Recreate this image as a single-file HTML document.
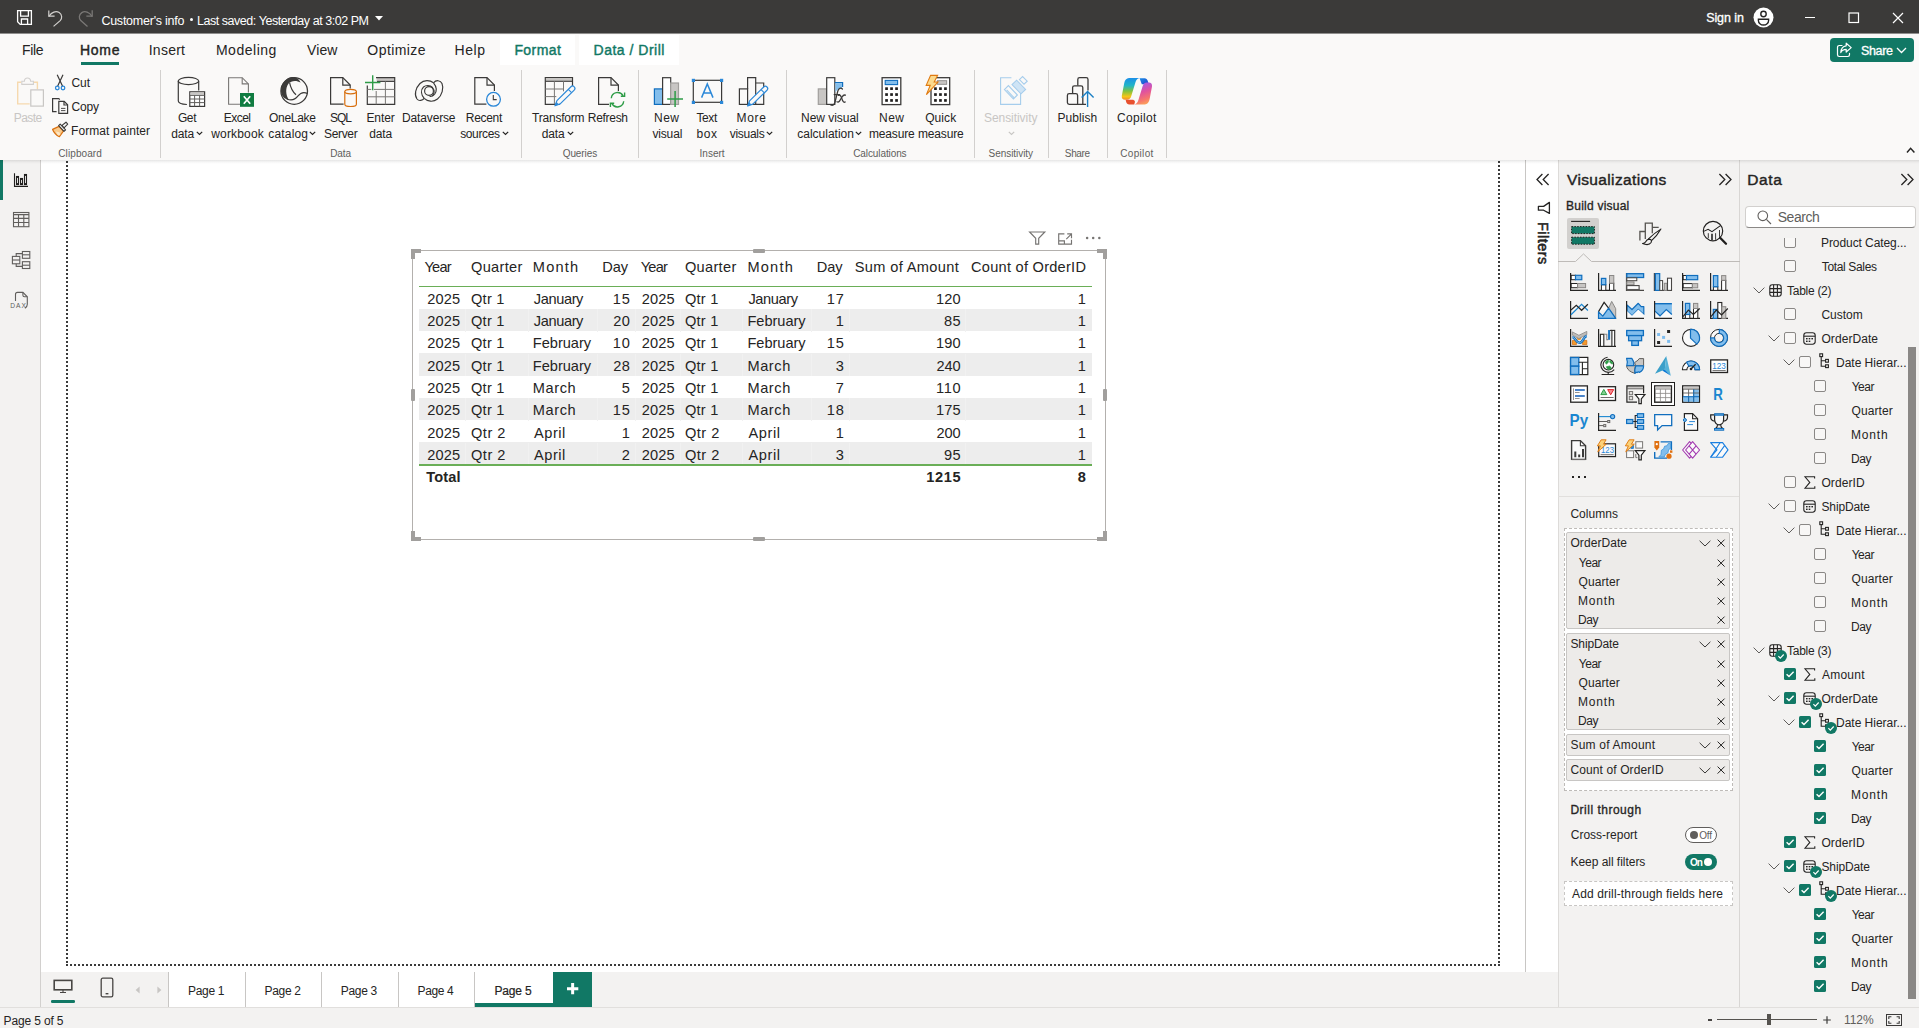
<!DOCTYPE html>
<html lang="en"><head><meta charset="utf-8"><title>Power BI Desktop</title><style>
html,body{margin:0;padding:0;}
body{width:1919px;height:1028px;overflow:hidden;position:relative;background:#f3f2f1;font-family:"Liberation Sans",sans-serif;}
.a{position:absolute;display:block;}
.t{position:absolute;white-space:nowrap;display:block;}
svg{overflow:visible;}
</style></head>
<body>
<!-- s1_frame -->
<div class="a" style="left:0px;top:0px;width:1919px;height:1028px;background:#f3f2f1;"></div>
<div class="a" style="left:0px;top:0px;width:1919px;height:33px;background:#3b3a39;"></div>
<div class="a" style="left:0px;top:33px;width:1919px;height:1px;background:#8f8e8d;"></div>
<div class="a" style="left:0px;top:34px;width:1919px;height:126px;background:#faf9f8;"></div>
<div class="a" style="left:0px;top:160px;width:1919px;height:4px;background:linear-gradient(rgba(0,0,0,0.10),rgba(0,0,0,0.035) 50%,rgba(0,0,0,0));z-index:5;"></div>
<div class="a" style="left:41px;top:160px;width:1484px;height:812px;background:#ffffff;"></div>
<div class="a" style="left:1526px;top:160px;width:32px;height:812px;background:#ffffff;"></div>
<div class="a" style="left:1525px;top:160px;width:1px;height:812px;background:#c8c6c4;"></div>
<div class="a" style="left:0px;top:160px;width:40px;height:848px;background:#f3f2f1;"></div>
<div class="a" style="left:40px;top:160px;width:1px;height:848px;background:#d2d0ce;"></div>
<div class="a" style="left:0px;top:160px;width:3px;height:40px;background:#117865;"></div>
<div class="a" style="left:1558px;top:160px;width:182px;height:848px;background:#f3f2f1;"></div>
<div class="a" style="left:1739px;top:160px;width:1px;height:848px;background:#d8d6d4;"></div>
<div class="a" style="left:1558px;top:160px;width:1px;height:848px;background:#dddbd9;"></div>
<div class="a" style="left:1740px;top:160px;width:179px;height:848px;background:#f3f2f1;"></div>
<div class="a" style="left:0px;top:1008px;width:1919px;height:20px;background:#f3f2f1;"></div>
<div class="a" style="left:0px;top:1007px;width:1919px;height:1px;background:#e1dfdd;"></div>
<div class="a" style="left:66px;top:161px;width:2px;height:802px;background:repeating-linear-gradient(to bottom,#3a3a3a 0 2px,transparent 2px 4px);background-position:0 0;"></div>
<div class="a" style="left:1498px;top:161px;width:2px;height:802px;background:repeating-linear-gradient(to bottom,#3a3a3a 0 2px,transparent 2px 4px);"></div>
<div class="a" style="left:66px;top:964px;width:1434px;height:2px;background:repeating-linear-gradient(to right,#3a3a3a 0 2px,transparent 2px 4px);"></div>
<!-- s2_title -->
<svg class="a" style="left:16px;top:9px;" width="17" height="17" viewBox="0 0 17 17"><g fill="none" stroke="#fff" stroke-width="1.3"><path d="M1.6 1.6h13.8v13.8H4.2L1.6 12.8z"/><path d="M4.6 1.6v5.6h7.8V1.6"/><path d="M5.4 15.4V10h6.2v5.4"/></g></svg>
<svg class="a" style="left:47px;top:9px;" width="17" height="18" viewBox="0 0 17 18"><g fill="none" stroke="#d2d0ce" stroke-width="1.2" stroke-linecap="square"><path d="M1.8 2v5.2H7"/><path d="M2.2 7C4.5 3.2 9 1.6 12.2 3.6c3 2 3.2 5.6 1 8L7 17"/></g></svg>
<svg class="a" style="left:77px;top:9px;" width="17" height="18" viewBox="0 0 17 18"><g fill="none" stroke="#7a7876" stroke-width="1.3" stroke-linecap="square"><path d="M15.2 2v5.2H10"/><path d="M14.8 7C12.5 3.2 8 1.6 4.8 3.6c-3 2-3.2 5.6-1 8L10 17"/></g></svg>
<span class="t" style="left:101.38px;top:15px;font-size:12.5px;line-height:12.5px;color:#ffffff;letter-spacing:-0.24px;">Customer's info</span>
<div class="a" style="left:189.7px;top:17.9px;width:3.6px;height:3.6px;background:#ffffff;border-radius:50%;"></div>
<span class="t" style="left:197px;top:15px;font-size:12.5px;line-height:12.5px;color:#ffffff;letter-spacing:-0.46px;">Last saved: Yesterday at 3:02 PM</span>
<svg class="a" style="left:375px;top:15.5px;" width="8" height="5" viewBox="0 0 8 5"><path d="M0 0h8L4 4.6z" fill="#fff"/></svg>
<span class="t" style="left:1706.14px;top:12px;font-size:12.5px;line-height:12.5px;color:#ffffff;-webkit-text-stroke:0.32px #ffffff;letter-spacing:-0.06px;">Sign in</span>
<svg class="a" style="left:1752.6px;top:6.5px;" width="21" height="21" viewBox="0 0 21 21"><circle cx="10.5" cy="10.5" r="10" fill="#fff"/><circle cx="10.5" cy="7" r="2.7" fill="none" stroke="#252423" stroke-width="1.4"/><path d="M5.4 12.2h10.2v1.2a5.1 4.6 0 0 1-10.2 0z" fill="none" stroke="#252423" stroke-width="1.4"/></svg>
<div class="a" style="left:1805px;top:17px;width:10px;height:1px;background:#fff;"></div>
<svg class="a" style="left:1848px;top:12px;" width="12" height="12" viewBox="0 0 12 12"><rect x="1" y="1" width="9.5" height="9.5" fill="none" stroke="#fff" stroke-width="1.2"/></svg>
<svg class="a" style="left:1892px;top:12px;" width="12" height="12" viewBox="0 0 12 12"><path d="M1 1l10 10M11 1L1 11" stroke="#fff" stroke-width="1.2" fill="none"/></svg>
<div class="a" style="left:500px;top:35px;width:75.3px;height:30px;background:#ffffff;"></div>
<div class="a" style="left:578.8px;top:35px;width:100.4px;height:30px;background:#ffffff;"></div>
<span class="t" style="left:21.88px;top:43px;font-size:14px;line-height:14px;color:#252423;letter-spacing:-0.29px;">File</span>
<span class="t" style="left:79.88px;top:43px;font-size:14px;line-height:14px;color:#252423;-webkit-text-stroke:0.42px #252423;letter-spacing:0.79px;">Home</span>
<div class="a" style="left:81px;top:62px;width:38px;height:3px;background:#117865;"></div>
<span class="t" style="left:148.74px;top:43px;font-size:14px;line-height:14px;color:#252423;letter-spacing:0.25px;">Insert</span>
<span class="t" style="left:215.88px;top:43px;font-size:14px;line-height:14px;color:#252423;letter-spacing:0.53px;">Modeling</span>
<span class="t" style="left:307px;top:43px;font-size:14px;line-height:14px;color:#252423;letter-spacing:0.13px;">View</span>
<span class="t" style="left:367.37px;top:43px;font-size:14px;line-height:14px;color:#252423;letter-spacing:0.42px;">Optimize</span>
<span class="t" style="left:454.38px;top:43px;font-size:14px;line-height:14px;color:#252423;letter-spacing:0.64px;">Help</span>
<span class="t" style="left:514.38px;top:43px;font-size:14px;line-height:14px;color:#117865;-webkit-text-stroke:0.42px #117865;letter-spacing:0.44px;">Format</span>
<span class="t" style="left:593.58px;top:43px;font-size:14px;line-height:14px;color:#117865;-webkit-text-stroke:0.42px #117865;letter-spacing:0.5px;">Data / Drill</span>
<div class="a" style="left:1830px;top:38px;width:84px;height:24px;background:#117865;border-radius:4px;"></div>
<svg class="a" style="left:1836px;top:41.5px;" width="17" height="16" viewBox="0 0 17 16"><g fill="none" stroke="#fff" stroke-width="1.2" stroke-linejoin="round" stroke-linecap="round"><path d="M6 3.5H3.2a1.7 1.7 0 0 0-1.7 1.7v7.6a1.7 1.7 0 0 0 1.7 1.7h8.6a1.7 1.7 0 0 0 1.7-1.7v-1.4"/><path d="M10.2 1.2l5 4.4-5 4.4V7.4C7.6 7.4 5.8 8.4 4.8 10.6 5 7 6.8 4.2 10.2 3.8z"/></g></svg>
<span class="t" style="left:1860.94px;top:45px;font-size:12.5px;line-height:12.5px;color:#fff;-webkit-text-stroke:0.32px #fff;letter-spacing:-0.31px;">Share</span>
<svg class="a" style="left:1896px;top:46.5px;" width="11" height="7" viewBox="0 0 11 7"><path d="M1 1l4.5 4.5L10 1" fill="none" stroke="#fff" stroke-width="1.3"/></svg>
<svg class="a" style="left:1906px;top:147px;" width="9" height="6" viewBox="0 0 9 6"><path d="M1 5.400L4.600 1.300 8.400 5.400" fill="none" stroke="#252423" stroke-width="1.500"/></svg>
<!-- s3_ribbon -->
<div class="a" style="left:160px;top:70px;width:1px;height:88px;background:#d2d0ce;"></div>
<div class="a" style="left:521px;top:70px;width:1px;height:88px;background:#d2d0ce;"></div>
<div class="a" style="left:638px;top:70px;width:1px;height:88px;background:#d2d0ce;"></div>
<div class="a" style="left:786px;top:70px;width:1px;height:88px;background:#d2d0ce;"></div>
<div class="a" style="left:974px;top:70px;width:1px;height:88px;background:#d2d0ce;"></div>
<div class="a" style="left:1048px;top:70px;width:1px;height:88px;background:#d2d0ce;"></div>
<div class="a" style="left:1107px;top:70px;width:1px;height:88px;background:#d2d0ce;"></div>
<div class="a" style="left:1166px;top:70px;width:1px;height:88px;background:#d2d0ce;"></div>
<span class="t" style="left:58.25px;top:149px;font-size:10px;line-height:10px;color:#605e5c;letter-spacing:0.1px;">Clipboard</span>
<span class="t" style="left:330.2px;top:149px;font-size:10px;line-height:10px;color:#605e5c;letter-spacing:-0.12px;">Data</span>
<span class="t" style="left:562.7px;top:149px;font-size:10px;line-height:10px;color:#605e5c;letter-spacing:-0.08px;">Queries</span>
<span class="t" style="left:699.5px;top:149px;font-size:10px;line-height:10px;color:#605e5c;letter-spacing:0.02px;">Insert</span>
<span class="t" style="left:853.25px;top:149px;font-size:10px;line-height:10px;color:#605e5c;letter-spacing:-0.1px;">Calculations</span>
<span class="t" style="left:988.55px;top:149px;font-size:10px;line-height:10px;color:#605e5c;letter-spacing:-0.05px;">Sensitivity</span>
<span class="t" style="left:1064.8px;top:149px;font-size:10px;line-height:10px;color:#605e5c;letter-spacing:-0.33px;">Share</span>
<span class="t" style="left:1120.25px;top:149px;font-size:10px;line-height:10px;color:#605e5c;letter-spacing:0.32px;">Copilot</span>
<span class="t" style="left:13.74px;top:112px;font-size:12px;line-height:12px;color:#c8c6c4;letter-spacing:-0.55px;">Paste</span>
<span class="t" style="left:71.4px;top:77px;font-size:12px;line-height:12px;color:#252423;letter-spacing:-0.03px;">Cut</span>
<span class="t" style="left:71.4px;top:101px;font-size:12px;line-height:12px;color:#252423;letter-spacing:-0.14px;">Copy</span>
<span class="t" style="left:71.04px;top:125px;font-size:12px;line-height:12px;color:#252423;letter-spacing:0.08px;">Format painter</span>
<span class="t" style="left:177.9px;top:112px;font-size:12px;line-height:12px;color:#252423;letter-spacing:-0.36px;">Get</span><span class="t" style="left:171.27px;top:128px;font-size:12px;line-height:12px;color:#252423;letter-spacing:-0.14px;">data</span><svg class="a" style="left:196.25px;top:131px;" width="7" height="5" viewBox="0 0 7 5"><path d="M0.8 0.8L3.5 3.5 6.2 0.8" fill="none" stroke="#252423" stroke-width="1.2"/></svg>
<span class="t" style="left:223.79px;top:112px;font-size:12px;line-height:12px;color:#252423;letter-spacing:-0.54px;">Excel</span><span class="t" style="left:211.31px;top:128px;font-size:12px;line-height:12px;color:#252423;letter-spacing:0.15px;">workbook</span>
<span class="t" style="left:268.96px;top:112px;font-size:12px;line-height:12px;color:#252423;letter-spacing:-0.28px;">OneLake</span><span class="t" style="left:268.27px;top:128px;font-size:12px;line-height:12px;color:#252423;letter-spacing:0.17px;">catalog</span><svg class="a" style="left:309.25px;top:131px;" width="7" height="5" viewBox="0 0 7 5"><path d="M0.8 0.8L3.5 3.5 6.2 0.8" fill="none" stroke="#252423" stroke-width="1.2"/></svg>
<span class="t" style="left:329.91px;top:112px;font-size:12px;line-height:12px;color:#252423;letter-spacing:-1px;">SQL</span><span class="t" style="left:323.96px;top:128px;font-size:12px;line-height:12px;color:#252423;letter-spacing:-0.32px;">Server</span>
<span class="t" style="left:366.44px;top:112px;font-size:12px;line-height:12px;color:#252423;letter-spacing:-0.08px;">Enter</span><span class="t" style="left:369.37px;top:128px;font-size:12px;line-height:12px;color:#252423;letter-spacing:-0.21px;">data</span>
<span class="t" style="left:402.04px;top:112px;font-size:12px;line-height:12px;color:#252423;letter-spacing:-0.15px;">Dataverse</span>
<span class="t" style="left:465.79px;top:112px;font-size:12px;line-height:12px;color:#252423;letter-spacing:-0.3px;">Recent</span><span class="t" style="left:460.2px;top:128px;font-size:12px;line-height:12px;color:#252423;letter-spacing:-0.38px;">sources</span><svg class="a" style="left:501.5px;top:131px;" width="7" height="5" viewBox="0 0 7 5"><path d="M0.8 0.8L3.5 3.5 6.2 0.8" fill="none" stroke="#252423" stroke-width="1.2"/></svg>
<span class="t" style="left:532.01px;top:112px;font-size:12px;line-height:12px;color:#252423;letter-spacing:-0.21px;">Transform</span><span class="t" style="left:541.77px;top:128px;font-size:12px;line-height:12px;color:#252423;letter-spacing:-0.14px;">data</span><svg class="a" style="left:566.75px;top:131px;" width="7" height="5" viewBox="0 0 7 5"><path d="M0.8 0.8L3.5 3.5 6.2 0.8" fill="none" stroke="#252423" stroke-width="1.2"/></svg>
<span class="t" style="left:587.79px;top:112px;font-size:12px;line-height:12px;color:#252423;letter-spacing:-0.3px;">Refresh</span>
<span class="t" style="left:654.04px;top:112px;font-size:12px;line-height:12px;color:#252423;letter-spacing:0.45px;">New</span><span class="t" style="left:652.4px;top:128px;font-size:12px;line-height:12px;color:#252423;letter-spacing:-0.15px;">visual</span>
<span class="t" style="left:696.51px;top:112px;font-size:12px;line-height:12px;color:#252423;letter-spacing:-0.41px;">Text</span><span class="t" style="left:696.53px;top:128px;font-size:12px;line-height:12px;color:#252423;letter-spacing:0.51px;">box</span>
<span class="t" style="left:736.54px;top:112px;font-size:12px;line-height:12px;color:#252423;letter-spacing:0.71px;">More</span><span class="t" style="left:729.75px;top:128px;font-size:12px;line-height:12px;color:#252423;letter-spacing:-0.29px;">visuals</span><svg class="a" style="left:766.25px;top:131px;" width="7" height="5" viewBox="0 0 7 5"><path d="M0.8 0.8L3.5 3.5 6.2 0.8" fill="none" stroke="#252423" stroke-width="1.2"/></svg>
<span class="t" style="left:801.04px;top:112px;font-size:12px;line-height:12px;color:#252423;letter-spacing:-0.04px;">New visual</span><span class="t" style="left:797.27px;top:128px;font-size:12px;line-height:12px;color:#252423;">calculation</span><svg class="a" style="left:855.25px;top:131px;" width="7" height="5" viewBox="0 0 7 5"><path d="M0.8 0.8L3.5 3.5 6.2 0.8" fill="none" stroke="#252423" stroke-width="1.2"/></svg>
<span class="t" style="left:879.04px;top:112px;font-size:12px;line-height:12px;color:#252423;letter-spacing:0.45px;">New</span><span class="t" style="left:868.97px;top:128px;font-size:12px;line-height:12px;color:#252423;letter-spacing:-0.15px;">measure</span>
<span class="t" style="left:925.21px;top:112px;font-size:12px;line-height:12px;color:#252423;letter-spacing:0.08px;">Quick</span><span class="t" style="left:917.97px;top:128px;font-size:12px;line-height:12px;color:#252423;letter-spacing:-0.15px;">measure</span>
<span class="t" style="left:983.96px;top:112px;font-size:12px;line-height:12px;color:#c8c6c4;letter-spacing:-0.05px;">Sensitivity</span>
<svg class="a" style="left:1007.5px;top:131px;" width="7" height="5" viewBox="0 0 7 5"><path d="M0.8 0.8L3.5 3.5 6.2 0.8" fill="none" stroke="#c8c6c4" stroke-width="1.2"/></svg>
<span class="t" style="left:1057.54px;top:112px;font-size:12px;line-height:12px;color:#252423;letter-spacing:0.05px;">Publish</span>
<span class="t" style="left:1117.05px;top:112px;font-size:12px;line-height:12px;color:#252423;letter-spacing:0.33px;">Copilot</span>
<!-- s3b_ribbon_icons -->
<svg class="a" style="left:0;top:0;" width="1200" height="160" viewBox="0 0 1200 160"><g fill="none" stroke-width="1.4"><path d="M21 82.3h-3.3v21.6h12" stroke="#f6d9ae"/><path d="M34 82.3h3.4v7" stroke="#f6d9ae"/><path d="M21.8 84.4v-3.2h2.6c0.2-4.2 6-4.2 6.2 0h2.8v3.2z" stroke="#d2d0ce" stroke-width="1.1"/><rect x="30.8" y="89.9" width="12.6" height="16.2" stroke="#c8c6c4" stroke-width="1.2" fill="#faf9f8"/></g><g fill="none" stroke-width="1.2"><path d="M57.2 74.8l5.4 11.4M63 74.8l-5.4 11.4" stroke="#3b3a39"/><circle cx="57.3" cy="88" r="1.8" stroke="#2b88d8" stroke-width="1.3"/><circle cx="63" cy="88" r="1.8" stroke="#2b88d8" stroke-width="1.3"/></g><g fill="none" stroke="#3b3a39" stroke-width="1.2"><path d="M56.6 111.6h-4V98.6h6.2l1 1"/><path d="M58.8 101.4h5.4l3.4 3.4v8.6h-8.8z" fill="#faf9f8"/><path d="M64 101.6v3.4h3.4"/><path d="M61 108.4h4.4M61 110.6h4.4" stroke-width="0.9"/></g><g stroke-linejoin="round"><path d="M52.600 129.400l6.400-3 4.400 4.800-4 5.400c-3-1.400-5.400-3.800-6.800-7.200z" fill="#f9c98a" stroke="#d9700f" stroke-width="1.200"/><path d="M56 131.600l3.400 0.600 1 2.200-1.600 1.400c-1.200-0.600-2.200-2.200-2.800-4.200z" fill="#fde7c4"/><path d="M58.600 125.600l1.600-1.400 5.400 5.600-1.600 1.600z" fill="#faf9f8" stroke="#3b3a39" stroke-width="1.100"/><path d="M62 125.400l4-3.200 1.700 1.900-3.700 3.700z" fill="#faf9f8" stroke="#3b3a39" stroke-width="1.100"/></g><g fill="none" stroke="#3b3a39" stroke-width="1.2"><ellipse cx="188.5" cy="81" rx="10.2" ry="3.6"/><path d="M178.3 81v20c0 1.8 3.6 3.2 8.6 3.5M198.7 81v9.6"/></g><g><rect x="189.8" y="91.8" width="14.8" height="14.6" fill="#fff" stroke="#3b3a39" stroke-width="1.2"/><rect x="190.4" y="92.4" width="13.6" height="2.4" fill="#c8c6c4"/><path d="M189.8 95.4h14.8M189.8 99h14.8M189.8 102.6h14.8M194.6 95.4v11M199.6 95.4v11" stroke="#605e5c" stroke-width="1" fill="none"/></g><g fill="none" stroke="#797775" stroke-width="1.1"><path d="M240 104.3h-11.4V77.7h13.6l6.2 6.2v8.6"/><path d="M242.2 77.7v6.2h6.2"/></g><rect x="240" y="93" width="14" height="13.8" fill="#107c41"/><path d="M243.8 96.2l6.4 7.6M250.2 96.2l-6.4 7.6" stroke="#fff" stroke-width="1.7" fill="none"/><g><circle cx="294.2" cy="91" r="13.3" fill="none" stroke="#3b3a39" stroke-width="1.3"/><path d="M281 91c0-5 2-9.4 5.6-11.4 2-3.2 9.6-3.6 12.6 0.6l1.4 2.4c-4-2.4-9.6-2-12 1-3.4 4.2-3 11.600 0.4 16.4-5-0.800-8-4.600-8-9z" fill="#3b3a39"/><path d="M289.600 82.600c1 5.400 3 9 6.400 12.200M286.800 99c4 1.600 8.400 0.600 11-2.800 2.400-3 6-4.600 9.600-2.600" fill="none" stroke="#3b3a39" stroke-width="1.2"/></g><g fill="none" stroke="#3b3a39" stroke-width="1.2"><path d="M343.600 104.100h-13V77.700h12.200l7.400 7.400v3.400"/><path d="M342.800 77.700v7.400h7.400"/></g><g fill="#faf9f8" stroke="#d86f0e" stroke-width="1.2"><path d="M344.800 91.600v12.600c0 1.300 2.600 2.300 5.800 2.300s5.800-1 5.800-2.300V91.600"/><ellipse cx="350.600" cy="91.600" rx="5.800" ry="2.300"/></g><g fill="none"><rect x="376.600" y="77.600" width="17.800" height="3.400" fill="#c8c6c4" stroke="none"/><path d="M376 77.700h18.700v26.700h-27.400V85.400" stroke="#3b3a39" stroke-width="1.200"/><path d="M377 81.400h17.600" stroke="#3b3a39" stroke-width="1.100"/><path d="M367.300 89.400h4M374 89.400h20.600M367.300 96.800h27.400M376.200 91v13.400M385.400 81.400v23" stroke="#797775" stroke-width="1"/><path d="M372.700 75.200v15M365 82.500h15.400" stroke="#2e9c47" stroke-width="1.400"/></g><g fill="none" stroke="#3b3a39" stroke-width="1.150"><path d="M433.500 82.800C430 80 424 79.500 420 83.500C415.500 88 414 95 417 99C419 101.500 422.500 100.500 424.200 98.300"/><path d="M424.200 98.300C421 94.500 420.500 90 423.500 87C426 84.800 430 85 432.500 87.500C435 90.500 434.500 94 432 96"/><circle cx="429" cy="91" r="4.400"/><path d="M424.200 98.300C427.500 101.500 433 102.500 437.500 99C442 95.500 444 88 442 83.500C440.500 80 436 79.800 433.500 82.800"/><path d="M433.500 82.800C436.500 86.500 437 91 434.500 94.500C433 96.300 431 96.500 429.500 96.200"/></g><g fill="none" stroke="#3b3a39" stroke-width="1.2"><path d="M486.400 104.100h-11.600V77.700h12.200l7.400 7.400v6"/><path d="M487 77.700v7.400h7.400"/></g><g fill="#faf9f8" stroke="#2b88d8" stroke-width="1.300"><circle cx="493.500" cy="99.300" r="6.900"/><path d="M493.300 95v4.600h3.400" fill="none" stroke="#3b3a39" stroke-width="1.100"/></g><g fill="none"><rect x="545.900" y="77.900" width="26" height="3.200" fill="#c8c6c4"/><path d="M560 104.300h-14.700V77.500h27.200v10" stroke="#3b3a39" stroke-width="1.200"/><path d="M545.300 81.300h27.200" stroke="#3b3a39" stroke-width="1.100"/><path d="M545.300 89h18M545.300 96.600h11M554.400 81.300v23M563.500 81.300v10" stroke="#797775" stroke-width="1"/></g><g transform="translate(555 105.8) rotate(-44.7)"><path d="M0 0l5-2.3 h19.71 a2.3 2.3 0 0 1 0 4.6 H5z" fill="#faf9f8" stroke="#2b88d8" stroke-width="1.200" stroke-linejoin="round"/><path d="M0 0l3.800-1.800v3.600z" fill="#2b88d8"/><path d="M21.01 -2.3 v4.6" stroke="#2b88d8" stroke-width="1.100" fill="none"/></g><g fill="none" stroke="#3b3a39" stroke-width="1.200"><path d="M609 104.300h-10.400V77.700h12.400l7.400 7.400v6"/><path d="M611 77.700v7.400h7.400"/></g><g fill="none" stroke="#2e9c47" stroke-width="1.400"><path d="M611.300 98.200a6.300 6.300 0 0 1 11.800-2.400M623.700 101.200a6.300 6.300 0 0 1-11.800 2.400"/><path d="M624.600 92.400v3.800h-3.800M610.400 107v-3.800h3.800"/></g><g stroke-width="1.200"><rect x="654.400" y="88.900" width="8.200" height="15.500" fill="#83beec" stroke="#106ebe"/><rect x="662.600" y="77.700" width="8.100" height="26.700" fill="#fff" stroke="#3b3a39"/><rect x="670.700" y="83" width="7.800" height="21.400" fill="#c8c6c4" stroke="#a19f9d"/><path d="M675.100 91v16M667.200 98.900h15.800" stroke="#2e9c47" stroke-width="1.500" fill="none"/></g><rect x="693.300" y="80.300" width="28.300" height="22" fill="none" stroke="#3b3a39" stroke-width="1.200"/><rect x="691.8" y="78.8" width="3.200" height="3.200" fill="#2b88d8"/><rect x="720" y="78.8" width="3.200" height="3.200" fill="#2b88d8"/><rect x="691.8" y="100.8" width="3.200" height="3.200" fill="#2b88d8"/><rect x="720" y="100.8" width="3.200" height="3.200" fill="#2b88d8"/><path d="M701.600 97.600l5.700-13.600 5.700 13.600M703.600 93h7.400" fill="none" stroke="#2b88d8" stroke-width="1.500"/><g fill="none" stroke="#3b3a39" stroke-width="1.200"><rect x="739.400" y="88.900" width="8.200" height="15.500"/><path d="M747.600 88.900V77.700h8.100v26.700h-8.100"/><path d="M755.700 83h8v21.400h-8"/></g><g transform="translate(747.6 106) rotate(-44.4)"><path d="M0 0l5-2.3 h19.85 a2.3 2.3 0 0 1 0 4.6 H5z" fill="#faf9f8" stroke="#2b88d8" stroke-width="1.200" stroke-linejoin="round"/><path d="M0 0l3.800-1.800v3.600z" fill="#2b88d8"/><path d="M21.15 -2.3 v4.6" stroke="#2b88d8" stroke-width="1.100" fill="none"/></g><g stroke-width="1.200"><rect x="818.300" y="88.900" width="8.400" height="15.500" fill="#c8c6c4" stroke="#a19f9d"/><rect x="826.700" y="77.700" width="8.100" height="26.700" fill="#fff" stroke="#3b3a39"/><path d="M834.800 82.600h7.800v4.400" fill="none" stroke="#106ebe"/><path d="M835.400 83.200h6.600v5c-3 0-5 1.400-6.600 4z" fill="#83beec" stroke="none"/></g><g fill="none" stroke="#3b3a39" stroke-width="1.300" stroke-linecap="round"><path d="M842.400 89c-1.600-1.600-3.800-0.800-4.600 2.200l-2.800 11c-0.700 2.800-2.400 3.800-4.200 2.800"/><path d="M834.200 94.600h5.400"/><path d="M838.600 95.400c1.200-0.600 2 0 2.600 1.400l1.400 3.800c0.600 1.400 1.400 2 2.600 1.400"/><path d="M845.400 95.200c-1.400-0.600-2.400 0.200-3.400 1.800l-2.200 3.600c-0.800 1.400-1.800 1.800-2.800 1.200"/></g><rect x="882.1" y="77.7" width="18.700" height="26.900" fill="#fff" stroke="#3b3a39" stroke-width="1.300"/><rect x="885.2" y="80.4" width="12.400" height="4.200" fill="#83beec" stroke="#106ebe" stroke-width="1.100"/><rect x="885.2" y="87.3" width="2.700" height="2.700" fill="#201f1e"/><rect x="890.2" y="87.3" width="2.700" height="2.700" fill="#201f1e"/><rect x="895.2" y="87.3" width="2.700" height="2.700" fill="#201f1e"/><rect x="885.2" y="93.2" width="2.700" height="2.700" fill="#201f1e"/><rect x="890.2" y="93.2" width="2.700" height="2.700" fill="#201f1e"/><rect x="895.2" y="93.2" width="2.700" height="2.700" fill="#201f1e"/><rect x="885.2" y="99.1" width="2.700" height="2.700" fill="#201f1e"/><rect x="890.2" y="99.1" width="2.700" height="2.700" fill="#201f1e"/><rect x="895.2" y="99.1" width="2.700" height="2.700" fill="#201f1e"/><rect x="931" y="77.7" width="18.700" height="26.900" fill="#fff" stroke="#3b3a39" stroke-width="1.300"/><rect x="937.3" y="80.7" width="9.400" height="3.600" fill="#c8c6c4" stroke="#8a8886" stroke-width="0.900"/><rect x="934.1" y="87.3" width="2.700" height="2.700" fill="#201f1e"/><rect x="939.1" y="87.3" width="2.700" height="2.700" fill="#201f1e"/><rect x="944.1" y="87.3" width="2.700" height="2.700" fill="#201f1e"/><rect x="934.1" y="93.2" width="2.700" height="2.700" fill="#201f1e"/><rect x="939.1" y="93.2" width="2.700" height="2.700" fill="#201f1e"/><rect x="944.1" y="93.2" width="2.700" height="2.700" fill="#201f1e"/><rect x="934.1" y="99.1" width="2.700" height="2.700" fill="#201f1e"/><rect x="939.1" y="99.1" width="2.700" height="2.700" fill="#201f1e"/><rect x="944.1" y="99.1" width="2.700" height="2.700" fill="#201f1e"/><path d="M930.600 75.400h7l-3.400 6.600h3.800l-11.600 12.600 3.800-9.200h-4z" fill="#fbd98c" stroke="#e07a10" stroke-width="1.100" stroke-linejoin="miter"/><g fill="none" stroke="#a6cdec" stroke-width="1.100"><path d="M1011.400 77.700h-10.800v26.700h20v-14"/><path d="M1012 84.600l4.600-4.400 9 9.200-4.600 4.400z" fill="#cfe4f5"/><path d="M1019.400 79.600l3.200-3 4.600 4.600-3.200 3z" fill="#faf9f8"/><path d="M1004.400 89.600l4-4 9 9.400-4 4z" fill="#faf9f8"/><path d="M1006.600 89.800l7.600 8" /></g><g fill="none" stroke="#3b3a39" stroke-width="1.300"><path d="M1077.800 85.600v-6.200a1.800 1.800 0 0 1 1.800-1.800h6.600a1.800 1.800 0 0 1 1.800 1.800v11"/><path d="M1072.600 93.400v-5.800a1.800 1.800 0 0 1 1.800-1.800h6.600a1.800 1.800 0 0 1 1.800 1.800v17"/><path d="M1086 104.400h-16.800a1.800 1.800 0 0 1-1.800-1.800v-7.200a1.800 1.800 0 0 1 1.800-1.800h6.600a1.800 1.800 0 0 1 1.800 1.800v9"/></g><path d="M1087.600 107V92M1081.600 97.600l6-6 6 6" fill="none" stroke="#1a7fc4" stroke-width="1.400"/><defs><linearGradient id="cpa" x1="0" y1="0" x2="0" y2="1"><stop offset="0" stop-color="#1b8fe8"/><stop offset="0.350" stop-color="#22b6c6"/><stop offset="0.600" stop-color="#7fc241"/><stop offset="0.850" stop-color="#f5c518"/><stop offset="1" stop-color="#f08c2e"/></linearGradient><linearGradient id="cpb" x1="0.300" y1="0" x2="0.600" y2="1"><stop offset="0" stop-color="#9b5cf0"/><stop offset="0.450" stop-color="#e0529e"/><stop offset="0.800" stop-color="#f7786b"/><stop offset="1" stop-color="#fba35a"/></linearGradient><linearGradient id="cpc" x1="0" y1="0" x2="1" y2="1"><stop offset="0" stop-color="#1b8fe8"/><stop offset="1" stop-color="#2340c9"/></linearGradient></defs><path d="M1139.600 78.200h5c1.600 0 2.600 1 3 2.400l1.200 3.600h-7z" fill="url(#cpc)"/><path d="M1129 78h10.600c-2.400 0.400-3.400 2-4.200 4.400l-4.200 13.800c-0.600 2-2 3.600-4.200 3.600h-2c-2.200 0-3.600-1.600-3.200-4l2.400-12.600c0.600-3 2.200-5.200 4.800-5.200z" fill="url(#cpa)"/><path d="M1144.800 104.400h-10.600c2.400-0.400 3.400-2 4.200-4.400l4.200-13.800c0.600-2 2-3.600 4.200-3.600h2c2.200 0 3.600 1.600 3.200 4l-2.400 12.600c-0.600 3-2.200 5.200-4.800 5.200z" fill="url(#cpb)"/><path d="M1134.200 104.400h-5c-1.600 0-2.600-1-3-2.400l-0.600-2.200h6.600c1.400 0 2.400 0.600 2.800 2z" fill="#e8502e"/></svg>
<!-- s4_visual -->
<div class="a" style="left:412px;top:250px;width:694px;height:290px;border:1px solid #b3b0ad;box-sizing:border-box;"></div>
<div class="a" style="left:411px;top:249px;width:10px;height:3.7px;background:#a19f9d;"></div>
<div class="a" style="left:411px;top:249px;width:3.7px;height:10px;background:#a19f9d;"></div>
<div class="a" style="left:1097px;top:249px;width:10px;height:3.7px;background:#a19f9d;"></div>
<div class="a" style="left:1103.3px;top:249px;width:3.7px;height:10px;background:#a19f9d;"></div>
<div class="a" style="left:411px;top:537.3px;width:10px;height:3.7px;background:#a19f9d;"></div>
<div class="a" style="left:411px;top:531px;width:3.7px;height:10px;background:#a19f9d;"></div>
<div class="a" style="left:1097px;top:537.3px;width:10px;height:3.7px;background:#a19f9d;"></div>
<div class="a" style="left:1103.3px;top:531px;width:3.7px;height:10px;background:#a19f9d;"></div>
<div class="a" style="left:753px;top:249px;width:12px;height:3.7px;background:#a19f9d;border-radius:1px;"></div>
<div class="a" style="left:753px;top:537.3px;width:12px;height:3.7px;background:#a19f9d;border-radius:1px;"></div>
<div class="a" style="left:411px;top:389px;width:3.7px;height:12px;background:#a19f9d;border-radius:1px;"></div>
<div class="a" style="left:1103.3px;top:389px;width:3.7px;height:12px;background:#a19f9d;border-radius:1px;"></div>
<svg class="a" style="left:1020px;top:224px;" width="90" height="26" viewBox="1020 224 90 26"><g fill="none" stroke="#767472" stroke-width="1.15"><path d="M1029.6 232h15.2l-6.1 6.300v5.800h-3v-5.800z" stroke-linejoin="miter"/><path d="M1064.400 233.900h-5.700v10.200h12.800v-4.300M1058.700 240.900h5.700v3.200"/><path d="M1067.200 233.900h4.300v4.300M1071.300 234.100l-5 5"/></g><circle cx="1087.100" cy="237.900" r="1.250" fill="#767472"/><circle cx="1093.200" cy="237.900" r="1.250" fill="#767472"/><circle cx="1099.300" cy="237.900" r="1.250" fill="#767472"/></svg>
<span class="t" style="left:424.41px;top:260px;font-size:14.6px;line-height:14.6px;color:#252423;letter-spacing:-0.75px;">Year</span>
<span class="t" style="left:471.04px;top:260px;font-size:14.6px;line-height:14.6px;color:#252423;letter-spacing:0.31px;">Quarter</span>
<span class="t" style="left:532.83px;top:260px;font-size:14.6px;line-height:14.6px;color:#252423;letter-spacing:1.2px;">Month</span>
<span class="t" style="left:602.33px;top:260px;font-size:14.6px;line-height:14.6px;color:#252423;letter-spacing:-0.11px;">Day</span>
<span class="t" style="left:640.71px;top:260px;font-size:14.6px;line-height:14.6px;color:#252423;letter-spacing:-0.75px;">Year</span>
<span class="t" style="left:684.94px;top:260px;font-size:14.6px;line-height:14.6px;color:#252423;letter-spacing:0.31px;">Quarter</span>
<span class="t" style="left:747.43px;top:260px;font-size:14.6px;line-height:14.6px;color:#252423;letter-spacing:1.2px;">Month</span>
<span class="t" style="left:816.73px;top:260px;font-size:14.6px;line-height:14.6px;color:#252423;letter-spacing:-0.11px;">Day</span>
<span class="t" style="left:854.74px;top:260px;font-size:14.6px;line-height:14.6px;color:#252423;letter-spacing:0.36px;">Sum of Amount</span>
<span class="t" style="left:971.07px;top:260px;font-size:14.6px;line-height:14.6px;color:#252423;letter-spacing:0.25px;">Count of OrderID</span>
<div class="a" style="left:419px;top:285.6px;width:672.8px;height:1.4px;background:#6aae57;"></div>
<span class="t" style="left:427.27px;top:292px;font-size:14.6px;line-height:14.6px;color:#252423;letter-spacing:0.14px;">2025</span>
<span class="t" style="left:471.04px;top:292px;font-size:14.6px;line-height:14.6px;color:#252423;letter-spacing:0.23px;">Qtr 1</span>
<span class="t" style="left:533.78px;top:292px;font-size:14.6px;line-height:14.6px;color:#252423;letter-spacing:-0.38px;">January</span>
<span class="t" style="left:612.8px;top:292px;font-size:14.6px;line-height:14.6px;color:#252423;letter-spacing:0.87px;">15</span>
<span class="t" style="left:641.67px;top:292px;font-size:14.6px;line-height:14.6px;color:#252423;letter-spacing:0.14px;">2025</span>
<span class="t" style="left:684.94px;top:292px;font-size:14.6px;line-height:14.6px;color:#252423;letter-spacing:0.23px;">Qtr 1</span>
<span class="t" style="left:748.38px;top:292px;font-size:14.6px;line-height:14.6px;color:#252423;letter-spacing:-0.38px;">January</span>
<span class="t" style="left:826.71px;top:292px;font-size:14.6px;line-height:14.6px;color:#252423;letter-spacing:0.95px;">17</span>
<span class="t" style="left:936.11px;top:292px;font-size:14.6px;line-height:14.6px;color:#252423;letter-spacing:0.1px;">120</span>
<span class="t" style="left:1077.75px;top:292px;font-size:14.6px;line-height:14.6px;color:#252423;">1</span>
<div class="a" style="left:419px;top:308.75px;width:672.8px;height:22.25px;background:#ededed;"></div>
<div class="a" style="left:464.8px;top:309.25px;width:1px;height:22.25px;background:#f1f1f1;"></div>
<div class="a" style="left:528px;top:309.25px;width:1px;height:22.25px;background:#f1f1f1;"></div>
<div class="a" style="left:596.9px;top:309.25px;width:1px;height:22.25px;background:#f1f1f1;"></div>
<div class="a" style="left:635px;top:309.25px;width:1px;height:22.25px;background:#f1f1f1;"></div>
<div class="a" style="left:679.5px;top:309.25px;width:1px;height:22.25px;background:#f1f1f1;"></div>
<div class="a" style="left:741.9px;top:309.25px;width:1px;height:22.25px;background:#f1f1f1;"></div>
<div class="a" style="left:810.5px;top:309.25px;width:1px;height:22.25px;background:#f1f1f1;"></div>
<div class="a" style="left:848.9px;top:309.25px;width:1px;height:22.25px;background:#f1f1f1;"></div>
<div class="a" style="left:964.9px;top:309.25px;width:1px;height:22.25px;background:#f1f1f1;"></div>
<span class="t" style="left:427.27px;top:314px;font-size:14.6px;line-height:14.6px;color:#252423;letter-spacing:0.14px;">2025</span>
<span class="t" style="left:471.04px;top:314px;font-size:14.6px;line-height:14.6px;color:#252423;letter-spacing:0.23px;">Qtr 1</span>
<span class="t" style="left:533.78px;top:314px;font-size:14.6px;line-height:14.6px;color:#252423;letter-spacing:-0.38px;">January</span>
<span class="t" style="left:613.17px;top:314px;font-size:14.6px;line-height:14.6px;color:#252423;letter-spacing:0.44px;">20</span>
<span class="t" style="left:641.67px;top:314px;font-size:14.6px;line-height:14.6px;color:#252423;letter-spacing:0.14px;">2025</span>
<span class="t" style="left:684.94px;top:314px;font-size:14.6px;line-height:14.6px;color:#252423;letter-spacing:0.23px;">Qtr 1</span>
<span class="t" style="left:747.43px;top:314px;font-size:14.6px;line-height:14.6px;color:#252423;letter-spacing:-0.03px;">February</span>
<span class="t" style="left:835.75px;top:314px;font-size:14.6px;line-height:14.6px;color:#252423;">1</span>
<span class="t" style="left:944.12px;top:314px;font-size:14.6px;line-height:14.6px;color:#252423;letter-spacing:0.36px;">85</span>
<span class="t" style="left:1077.75px;top:314px;font-size:14.6px;line-height:14.6px;color:#252423;">1</span>
<span class="t" style="left:427.27px;top:336px;font-size:14.6px;line-height:14.6px;color:#252423;letter-spacing:0.14px;">2025</span>
<span class="t" style="left:471.04px;top:336px;font-size:14.6px;line-height:14.6px;color:#252423;letter-spacing:0.23px;">Qtr 1</span>
<span class="t" style="left:532.83px;top:336px;font-size:14.6px;line-height:14.6px;color:#252423;letter-spacing:-0.03px;">February</span>
<span class="t" style="left:612.8px;top:336px;font-size:14.6px;line-height:14.6px;color:#252423;letter-spacing:0.8px;">10</span>
<span class="t" style="left:641.67px;top:336px;font-size:14.6px;line-height:14.6px;color:#252423;letter-spacing:0.14px;">2025</span>
<span class="t" style="left:684.94px;top:336px;font-size:14.6px;line-height:14.6px;color:#252423;letter-spacing:0.23px;">Qtr 1</span>
<span class="t" style="left:747.43px;top:336px;font-size:14.6px;line-height:14.6px;color:#252423;letter-spacing:-0.03px;">February</span>
<span class="t" style="left:826.71px;top:336px;font-size:14.6px;line-height:14.6px;color:#252423;letter-spacing:0.87px;">15</span>
<span class="t" style="left:936.11px;top:336px;font-size:14.6px;line-height:14.6px;color:#252423;letter-spacing:0.1px;">190</span>
<span class="t" style="left:1077.75px;top:336px;font-size:14.6px;line-height:14.6px;color:#252423;">1</span>
<div class="a" style="left:419px;top:353.25px;width:672.8px;height:22.25px;background:#ededed;"></div>
<div class="a" style="left:464.8px;top:353.75px;width:1px;height:22.25px;background:#f1f1f1;"></div>
<div class="a" style="left:528px;top:353.75px;width:1px;height:22.25px;background:#f1f1f1;"></div>
<div class="a" style="left:596.9px;top:353.75px;width:1px;height:22.25px;background:#f1f1f1;"></div>
<div class="a" style="left:635px;top:353.75px;width:1px;height:22.25px;background:#f1f1f1;"></div>
<div class="a" style="left:679.5px;top:353.75px;width:1px;height:22.25px;background:#f1f1f1;"></div>
<div class="a" style="left:741.9px;top:353.75px;width:1px;height:22.25px;background:#f1f1f1;"></div>
<div class="a" style="left:810.5px;top:353.75px;width:1px;height:22.25px;background:#f1f1f1;"></div>
<div class="a" style="left:848.9px;top:353.75px;width:1px;height:22.25px;background:#f1f1f1;"></div>
<div class="a" style="left:964.9px;top:353.75px;width:1px;height:22.25px;background:#f1f1f1;"></div>
<span class="t" style="left:427.27px;top:359px;font-size:14.6px;line-height:14.6px;color:#252423;letter-spacing:0.14px;">2025</span>
<span class="t" style="left:471.04px;top:359px;font-size:14.6px;line-height:14.6px;color:#252423;letter-spacing:0.23px;">Qtr 1</span>
<span class="t" style="left:532.83px;top:359px;font-size:14.6px;line-height:14.6px;color:#252423;letter-spacing:-0.03px;">February</span>
<span class="t" style="left:613.17px;top:359px;font-size:14.6px;line-height:14.6px;color:#252423;letter-spacing:0.51px;">28</span>
<span class="t" style="left:641.67px;top:359px;font-size:14.6px;line-height:14.6px;color:#252423;letter-spacing:0.14px;">2025</span>
<span class="t" style="left:684.94px;top:359px;font-size:14.6px;line-height:14.6px;color:#252423;letter-spacing:0.23px;">Qtr 1</span>
<span class="t" style="left:747.43px;top:359px;font-size:14.6px;line-height:14.6px;color:#252423;letter-spacing:0.58px;">March</span>
<span class="t" style="left:835.68px;top:359px;font-size:14.6px;line-height:14.6px;color:#252423;">3</span>
<span class="t" style="left:936.47px;top:359px;font-size:14.6px;line-height:14.6px;color:#252423;letter-spacing:-0.08px;">240</span>
<span class="t" style="left:1077.75px;top:359px;font-size:14.6px;line-height:14.6px;color:#252423;">1</span>
<span class="t" style="left:427.27px;top:381px;font-size:14.6px;line-height:14.6px;color:#252423;letter-spacing:0.14px;">2025</span>
<span class="t" style="left:471.04px;top:381px;font-size:14.6px;line-height:14.6px;color:#252423;letter-spacing:0.23px;">Qtr 1</span>
<span class="t" style="left:532.83px;top:381px;font-size:14.6px;line-height:14.6px;color:#252423;letter-spacing:0.58px;">March</span>
<span class="t" style="left:621.78px;top:381px;font-size:14.6px;line-height:14.6px;color:#252423;">5</span>
<span class="t" style="left:641.67px;top:381px;font-size:14.6px;line-height:14.6px;color:#252423;letter-spacing:0.14px;">2025</span>
<span class="t" style="left:684.94px;top:381px;font-size:14.6px;line-height:14.6px;color:#252423;letter-spacing:0.23px;">Qtr 1</span>
<span class="t" style="left:747.43px;top:381px;font-size:14.6px;line-height:14.6px;color:#252423;letter-spacing:0.58px;">March</span>
<span class="t" style="left:835.75px;top:381px;font-size:14.6px;line-height:14.6px;color:#252423;">7</span>
<span class="t" style="left:936.11px;top:381px;font-size:14.6px;line-height:14.6px;color:#252423;letter-spacing:0.61px;">110</span>
<span class="t" style="left:1077.75px;top:381px;font-size:14.6px;line-height:14.6px;color:#252423;">1</span>
<div class="a" style="left:419px;top:397.75px;width:672.8px;height:22.25px;background:#ededed;"></div>
<div class="a" style="left:464.8px;top:398.25px;width:1px;height:22.25px;background:#f1f1f1;"></div>
<div class="a" style="left:528px;top:398.25px;width:1px;height:22.25px;background:#f1f1f1;"></div>
<div class="a" style="left:596.9px;top:398.25px;width:1px;height:22.25px;background:#f1f1f1;"></div>
<div class="a" style="left:635px;top:398.25px;width:1px;height:22.25px;background:#f1f1f1;"></div>
<div class="a" style="left:679.5px;top:398.25px;width:1px;height:22.25px;background:#f1f1f1;"></div>
<div class="a" style="left:741.9px;top:398.25px;width:1px;height:22.25px;background:#f1f1f1;"></div>
<div class="a" style="left:810.5px;top:398.25px;width:1px;height:22.25px;background:#f1f1f1;"></div>
<div class="a" style="left:848.9px;top:398.25px;width:1px;height:22.25px;background:#f1f1f1;"></div>
<div class="a" style="left:964.9px;top:398.25px;width:1px;height:22.25px;background:#f1f1f1;"></div>
<span class="t" style="left:427.27px;top:403px;font-size:14.6px;line-height:14.6px;color:#252423;letter-spacing:0.14px;">2025</span>
<span class="t" style="left:471.04px;top:403px;font-size:14.6px;line-height:14.6px;color:#252423;letter-spacing:0.23px;">Qtr 1</span>
<span class="t" style="left:532.83px;top:403px;font-size:14.6px;line-height:14.6px;color:#252423;letter-spacing:0.58px;">March</span>
<span class="t" style="left:612.8px;top:403px;font-size:14.6px;line-height:14.6px;color:#252423;letter-spacing:0.87px;">15</span>
<span class="t" style="left:641.67px;top:403px;font-size:14.6px;line-height:14.6px;color:#252423;letter-spacing:0.14px;">2025</span>
<span class="t" style="left:684.94px;top:403px;font-size:14.6px;line-height:14.6px;color:#252423;letter-spacing:0.23px;">Qtr 1</span>
<span class="t" style="left:747.43px;top:403px;font-size:14.6px;line-height:14.6px;color:#252423;letter-spacing:0.58px;">March</span>
<span class="t" style="left:826.71px;top:403px;font-size:14.6px;line-height:14.6px;color:#252423;letter-spacing:0.87px;">18</span>
<span class="t" style="left:936.11px;top:403px;font-size:14.6px;line-height:14.6px;color:#252423;letter-spacing:0.13px;">175</span>
<span class="t" style="left:1077.75px;top:403px;font-size:14.6px;line-height:14.6px;color:#252423;">1</span>
<span class="t" style="left:427.27px;top:426px;font-size:14.6px;line-height:14.6px;color:#252423;letter-spacing:0.14px;">2025</span>
<span class="t" style="left:471.04px;top:426px;font-size:14.6px;line-height:14.6px;color:#252423;letter-spacing:0.48px;">Qtr 2</span>
<span class="t" style="left:534px;top:426px;font-size:14.6px;line-height:14.6px;color:#252423;letter-spacing:0.54px;">April</span>
<span class="t" style="left:621.85px;top:426px;font-size:14.6px;line-height:14.6px;color:#252423;">1</span>
<span class="t" style="left:641.67px;top:426px;font-size:14.6px;line-height:14.6px;color:#252423;letter-spacing:0.14px;">2025</span>
<span class="t" style="left:684.94px;top:426px;font-size:14.6px;line-height:14.6px;color:#252423;letter-spacing:0.48px;">Qtr 2</span>
<span class="t" style="left:748.6px;top:426px;font-size:14.6px;line-height:14.6px;color:#252423;letter-spacing:0.54px;">April</span>
<span class="t" style="left:835.75px;top:426px;font-size:14.6px;line-height:14.6px;color:#252423;">1</span>
<span class="t" style="left:936.47px;top:426px;font-size:14.6px;line-height:14.6px;color:#252423;letter-spacing:-0.08px;">200</span>
<span class="t" style="left:1077.75px;top:426px;font-size:14.6px;line-height:14.6px;color:#252423;">1</span>
<div class="a" style="left:419px;top:442.25px;width:672.8px;height:22.25px;background:#ededed;"></div>
<div class="a" style="left:464.8px;top:442.75px;width:1px;height:22.25px;background:#f1f1f1;"></div>
<div class="a" style="left:528px;top:442.75px;width:1px;height:22.25px;background:#f1f1f1;"></div>
<div class="a" style="left:596.9px;top:442.75px;width:1px;height:22.25px;background:#f1f1f1;"></div>
<div class="a" style="left:635px;top:442.75px;width:1px;height:22.25px;background:#f1f1f1;"></div>
<div class="a" style="left:679.5px;top:442.75px;width:1px;height:22.25px;background:#f1f1f1;"></div>
<div class="a" style="left:741.9px;top:442.75px;width:1px;height:22.25px;background:#f1f1f1;"></div>
<div class="a" style="left:810.5px;top:442.75px;width:1px;height:22.25px;background:#f1f1f1;"></div>
<div class="a" style="left:848.9px;top:442.75px;width:1px;height:22.25px;background:#f1f1f1;"></div>
<div class="a" style="left:964.9px;top:442.75px;width:1px;height:22.25px;background:#f1f1f1;"></div>
<span class="t" style="left:427.27px;top:448px;font-size:14.6px;line-height:14.6px;color:#252423;letter-spacing:0.14px;">2025</span>
<span class="t" style="left:471.04px;top:448px;font-size:14.6px;line-height:14.6px;color:#252423;letter-spacing:0.48px;">Qtr 2</span>
<span class="t" style="left:534px;top:448px;font-size:14.6px;line-height:14.6px;color:#252423;letter-spacing:0.54px;">April</span>
<span class="t" style="left:621.85px;top:448px;font-size:14.6px;line-height:14.6px;color:#252423;">2</span>
<span class="t" style="left:641.67px;top:448px;font-size:14.6px;line-height:14.6px;color:#252423;letter-spacing:0.14px;">2025</span>
<span class="t" style="left:684.94px;top:448px;font-size:14.6px;line-height:14.6px;color:#252423;letter-spacing:0.48px;">Qtr 2</span>
<span class="t" style="left:748.6px;top:448px;font-size:14.6px;line-height:14.6px;color:#252423;letter-spacing:0.54px;">April</span>
<span class="t" style="left:835.68px;top:448px;font-size:14.6px;line-height:14.6px;color:#252423;">3</span>
<span class="t" style="left:944.04px;top:448px;font-size:14.6px;line-height:14.6px;color:#252423;letter-spacing:0.44px;">95</span>
<span class="t" style="left:1077.75px;top:448px;font-size:14.6px;line-height:14.6px;color:#252423;">1</span>
<div class="a" style="left:419px;top:464.4px;width:672.8px;height:1.8px;background:#6aae57;"></div>
<span class="t" style="left:426.15px;top:470px;font-size:14.6px;line-height:14.6px;color:#252423;font-weight:700;letter-spacing:0.19px;">Total</span>
<span class="t" style="left:926.32px;top:470px;font-size:14.6px;line-height:14.6px;color:#252423;font-weight:700;letter-spacing:0.59px;">1215</span>
<span class="t" style="left:1077.86px;top:470px;font-size:14.6px;line-height:14.6px;color:#252423;font-weight:700;">8</span>
<!-- s5_viz -->
<svg class="a" style="left:1535.5px;top:172.5px;" width="14" height="13" viewBox="0 0 14 13"><path d="M6.4 1L1 6.5l5.4 5.5M12.6 1L7.2 6.5l5.4 5.5" fill="none" stroke="#252423" stroke-width="1.3"/></svg>
<svg class="a" style="left:1537px;top:200.5px;" width="14" height="14" viewBox="0 0 14 14"><path d="M12.4 1.4v11L6.6 9.2H1.4V5.4l5.2 0z" fill="none" stroke="#252423" stroke-width="1.3" stroke-linejoin="round" transform="rotate(0)"/></svg>
<span class="t" style="left:1535px;top:222px;font-size:14.5px;line-height:15px;-webkit-text-stroke:0.55px #252423;color:#252423;writing-mode:vertical-rl;letter-spacing:0.45px;">Filters</span>
<span class="t" style="left:1567px;top:172px;font-size:15.5px;line-height:15.5px;color:#252423;-webkit-text-stroke:0.42px #252423;letter-spacing:0.36px;">Visualizations</span>
<svg class="a" style="left:1717.5px;top:172.5px;" width="14" height="13" viewBox="0 0 14 13"><path d="M1.4 1l5.4 5.5L1.4 12M7.6 1L13 6.5 7.6 12" fill="none" stroke="#252423" stroke-width="1.3"/></svg>
<span class="t" style="left:1566.04px;top:200px;font-size:12px;line-height:12px;color:#252423;-webkit-text-stroke:0.32px #252423;letter-spacing:0.23px;">Build visual</span>
<div class="a" style="left:1567px;top:217.5px;width:32px;height:31.5px;background:#d2d0ce;border-radius:2px;"></div>
<svg class="a" style="left:1558px;top:252px;" width="182" height="11" viewBox="0 0 182 11"><path d="M0 9.5h17.5l8-7.6 8 7.6H182" fill="none" stroke="#bebbb8" stroke-width="1"/></svg>
<div class="a" style="left:1572px;top:476.3px;width:2px;height:2px;background:#252423;"></div>
<div class="a" style="left:1578.1px;top:476.3px;width:2px;height:2px;background:#252423;"></div>
<div class="a" style="left:1584.2px;top:476.3px;width:2px;height:2px;background:#252423;"></div>
<div class="a" style="left:1558px;top:496px;width:181px;height:1px;background:#e1dfdd;"></div>
<span class="t" style="left:1570.4px;top:508px;font-size:12px;line-height:12px;color:#252423;letter-spacing:0.03px;">Columns</span>
<div class="a" style="left:1563.5px;top:527.5px;width:169.5px;height:263.5px;background:#ffffff;border:1px dashed #bebbb8;box-sizing:border-box;"></div>
<div class="a" style="left:1566.3px;top:531.6px;width:163.5px;height:97.7px;background:#edebe9;border:1px solid #c8c6c4;box-sizing:border-box;border-radius:2px;"></div>
<span class="t" style="left:1570.46px;top:537px;font-size:12px;line-height:12px;color:#252423;letter-spacing:0.07px;">OrderDate</span>
<svg class="a" style="left:1699px;top:539.9px;" width="12" height="7" viewBox="0 0 12 7"><path d="M0.6 0.8l5.4 5.2 5.4-5.2" fill="none" stroke="#252423" stroke-width="0.9"/></svg>
<svg class="a" style="left:1717px;top:539px;" width="8.2" height="8.2" viewBox="0 0 8.2 8.2"><path d="M0.6 0.6l7 7M7.6 0.6l-7 7" fill="none" stroke="#252423" stroke-width="1"/></svg>
<span class="t" style="left:1578.76px;top:557px;font-size:12px;line-height:12px;color:#252423;letter-spacing:-0.46px;">Year</span>
<svg class="a" style="left:1717px;top:558.8px;" width="8.2" height="8.2" viewBox="0 0 8.2 8.2"><path d="M0.6 0.6l7 7M7.6 0.6l-7 7" fill="none" stroke="#252423" stroke-width="1"/></svg>
<span class="t" style="left:1578.46px;top:576px;font-size:12px;line-height:12px;color:#252423;letter-spacing:0.09px;">Quarter</span>
<svg class="a" style="left:1717px;top:577.8px;" width="8.2" height="8.2" viewBox="0 0 8.2 8.2"><path d="M0.6 0.6l7 7M7.6 0.6l-7 7" fill="none" stroke="#252423" stroke-width="1"/></svg>
<span class="t" style="left:1578.04px;top:595px;font-size:12px;line-height:12px;color:#252423;letter-spacing:0.83px;">Month</span>
<svg class="a" style="left:1717px;top:596.8px;" width="8.2" height="8.2" viewBox="0 0 8.2 8.2"><path d="M0.6 0.6l7 7M7.6 0.6l-7 7" fill="none" stroke="#252423" stroke-width="1"/></svg>
<span class="t" style="left:1578.04px;top:614px;font-size:12px;line-height:12px;color:#252423;letter-spacing:-0.45px;">Day</span>
<svg class="a" style="left:1717px;top:615.8px;" width="8.2" height="8.2" viewBox="0 0 8.2 8.2"><path d="M0.6 0.6l7 7M7.6 0.6l-7 7" fill="none" stroke="#252423" stroke-width="1"/></svg>
<div class="a" style="left:1566.3px;top:632.6px;width:163.5px;height:97.7px;background:#edebe9;border:1px solid #c8c6c4;box-sizing:border-box;border-radius:2px;"></div>
<span class="t" style="left:1570.46px;top:638px;font-size:12px;line-height:12px;color:#252423;letter-spacing:-0.12px;">ShipDate</span>
<svg class="a" style="left:1699px;top:640.9px;" width="12" height="7" viewBox="0 0 12 7"><path d="M0.6 0.8l5.4 5.2 5.4-5.2" fill="none" stroke="#252423" stroke-width="0.9"/></svg>
<svg class="a" style="left:1717px;top:640px;" width="8.2" height="8.2" viewBox="0 0 8.2 8.2"><path d="M0.6 0.6l7 7M7.6 0.6l-7 7" fill="none" stroke="#252423" stroke-width="1"/></svg>
<span class="t" style="left:1578.76px;top:658px;font-size:12px;line-height:12px;color:#252423;letter-spacing:-0.46px;">Year</span>
<svg class="a" style="left:1717px;top:659.8px;" width="8.2" height="8.2" viewBox="0 0 8.2 8.2"><path d="M0.6 0.6l7 7M7.6 0.6l-7 7" fill="none" stroke="#252423" stroke-width="1"/></svg>
<span class="t" style="left:1578.46px;top:677px;font-size:12px;line-height:12px;color:#252423;letter-spacing:0.09px;">Quarter</span>
<svg class="a" style="left:1717px;top:678.8px;" width="8.2" height="8.2" viewBox="0 0 8.2 8.2"><path d="M0.6 0.6l7 7M7.6 0.6l-7 7" fill="none" stroke="#252423" stroke-width="1"/></svg>
<span class="t" style="left:1578.04px;top:696px;font-size:12px;line-height:12px;color:#252423;letter-spacing:0.83px;">Month</span>
<svg class="a" style="left:1717px;top:697.8px;" width="8.2" height="8.2" viewBox="0 0 8.2 8.2"><path d="M0.6 0.6l7 7M7.6 0.6l-7 7" fill="none" stroke="#252423" stroke-width="1"/></svg>
<span class="t" style="left:1578.04px;top:715px;font-size:12px;line-height:12px;color:#252423;letter-spacing:-0.45px;">Day</span>
<svg class="a" style="left:1717px;top:716.8px;" width="8.2" height="8.2" viewBox="0 0 8.2 8.2"><path d="M0.6 0.6l7 7M7.6 0.6l-7 7" fill="none" stroke="#252423" stroke-width="1"/></svg>
<div class="a" style="left:1566.3px;top:733.6px;width:163.5px;height:22px;background:#edebe9;border:1px solid #c8c6c4;box-sizing:border-box;border-radius:2px;"></div>
<span class="t" style="left:1570.46px;top:739px;font-size:12px;line-height:12px;color:#252423;letter-spacing:0.21px;">Sum of Amount</span>
<svg class="a" style="left:1699px;top:741.9px;" width="12" height="7" viewBox="0 0 12 7"><path d="M0.6 0.8l5.4 5.2 5.4-5.2" fill="none" stroke="#252423" stroke-width="0.9"/></svg>
<svg class="a" style="left:1717px;top:741px;" width="8.2" height="8.2" viewBox="0 0 8.2 8.2"><path d="M0.6 0.6l7 7M7.6 0.6l-7 7" fill="none" stroke="#252423" stroke-width="1"/></svg>
<div class="a" style="left:1566.3px;top:758.6px;width:163.5px;height:22px;background:#edebe9;border:1px solid #c8c6c4;box-sizing:border-box;border-radius:2px;"></div>
<span class="t" style="left:1570.4px;top:764px;font-size:12px;line-height:12px;color:#252423;letter-spacing:0.12px;">Count of OrderID</span>
<svg class="a" style="left:1699px;top:766.9px;" width="12" height="7" viewBox="0 0 12 7"><path d="M0.6 0.8l5.4 5.2 5.4-5.2" fill="none" stroke="#252423" stroke-width="0.9"/></svg>
<svg class="a" style="left:1717px;top:766px;" width="8.2" height="8.2" viewBox="0 0 8.2 8.2"><path d="M0.6 0.6l7 7M7.6 0.6l-7 7" fill="none" stroke="#252423" stroke-width="1"/></svg>
<span class="t" style="left:1570.44px;top:804px;font-size:12px;line-height:12px;color:#252423;-webkit-text-stroke:0.32px #252423;letter-spacing:0.5px;">Drill through</span>
<span class="t" style="left:1570.8px;top:829px;font-size:12px;line-height:12px;color:#252423;letter-spacing:-0.01px;">Cross-report</span>
<div class="a" style="left:1685px;top:827px;width:32px;height:16px;background:#ffffff;border:1px solid #605e5c;box-sizing:border-box;border-radius:8px;"></div>
<div class="a" style="left:1689.7px;top:831px;width:8px;height:8px;background:#605e5c;border-radius:50%;"></div>
<span class="t" style="left:1699.15px;top:831px;font-size:10px;line-height:10px;color:#605e5c;letter-spacing:-0.13px;">Off</span>
<span class="t" style="left:1570.44px;top:856px;font-size:12px;line-height:12px;color:#252423;letter-spacing:-0.03px;">Keep all filters</span>
<div class="a" style="left:1685px;top:854.3px;width:32px;height:16px;background:#117865;border-radius:8px;"></div>
<span class="t" style="left:1689.9px;top:858px;font-size:10px;line-height:10px;color:#fff;font-weight:700;letter-spacing:-0.9px;">On</span>
<div class="a" style="left:1704px;top:858.3px;width:8px;height:8px;background:#fff;border-radius:50%;"></div>
<div class="a" style="left:1563.5px;top:880.5px;width:169.5px;height:25px;background:#fff;border:1px dashed #c8c6c4;box-sizing:border-box;"></div>
<span class="t" style="left:1572px;top:888px;font-size:12px;line-height:12px;color:#252423;letter-spacing:0.15px;">Add drill-through fields here</span>
<!-- s5b_viz_icons -->
<svg class="a" style="left:1570px;top:220px;" width="26" height="26" viewBox="0 0 26 26"><path d="M1.100 1.400h19" stroke="#252423" stroke-width="1.100"/><rect x="1.600" y="6.600" width="22.800" height="7" fill="#117865" stroke="#201f1e" stroke-width="1" stroke-dasharray="1.500 1.300"/><rect x="1.600" y="17.200" width="22.800" height="7" fill="#117865" stroke="#201f1e" stroke-width="1" stroke-dasharray="1.500 1.300"/></svg>
<svg class="a" style="left:1632px;top:216px;" width="100" height="34" viewBox="1632 216 100 34"><g fill="none" stroke="#55534f" stroke-width="1.300"><path d="M1639.900 240.500V231.500h5.400M1645.300 238.900V223.100h7v10.200M1652.300 227.300h6.400"/></g><path d="M1660.900 229.100c-4.800 2.900-9 6.300-12.400 9.800l2.300 2.400c3.900-3.300 7.500-7.300 10.100-12.200z" fill="#f3f2f1" stroke="#201f1e" stroke-width="1.100" stroke-linejoin="round"/><path d="M1648.900 239.100c-1.600 0.400-2.600 1.400-3.200 2.600-0.600 1.200-1.600 1.800-3.200 1.800 3.400 1.400 7 1.400 8.600-1 0.600-1 0.400-2.200-0.400-3z" fill="#f3f2f1" stroke="#201f1e" stroke-width="1.100" stroke-linejoin="round"/><circle cx="1713" cy="231.100" r="9.700" fill="none" stroke="#201f1e" stroke-width="1.150"/><path d="M1703.700 231.400l4.400-2.100 3.900 2.300 8.100-5.700" fill="none" stroke="#201f1e" stroke-width="1.050"/><path d="M1708.300 233.200v5M1715.600 233.200v6.600M1719.500 230v6.800" stroke="#3b3a39" stroke-width="1"/><path d="M1712 233.700v6.200" stroke="#3b3a39" stroke-width="1.800"/><path d="M1720.100 237.800l5.900 6" stroke="#201f1e" stroke-width="2.300" stroke-linecap="round"/></svg>
<div class="a" style="left:1651px;top:382px;width:24px;height:24px;background:#ffffff;border:1px solid #201f1e;box-sizing:border-box;"></div>
<svg class="a" style="left:1570px;top:273px;" width="18" height="18" viewBox="0 0 18 18"><path d="M0.6 0v17.4H18" fill="none" stroke="#252423" stroke-width="1.2"/><rect x="1.2" y="2.3" width="4.3" height="4.4" fill="#ffffff" stroke="#252423" stroke-width="1"/><rect x="5.5" y="2.3" width="6.3" height="4.4" fill="#83beec" stroke="#106ebe" stroke-width="1.2"/><rect x="1.2" y="10.5" width="6.4" height="4.2" fill="#ffffff" stroke="#252423" stroke-width="1"/><rect x="7.6" y="10.5" width="8" height="4.2" fill="#c8c6c4" stroke="#8a8886" stroke-width="1"/></svg>
<svg class="a" style="left:1598px;top:273px;" width="18" height="18" viewBox="0 0 18 18"><path d="M0.6 0v17.4H18" fill="none" stroke="#252423" stroke-width="1.2"/><rect x="3.4" y="11.7" width="4.4" height="5.7" fill="#ffffff" stroke="#252423" stroke-width="1"/><rect x="3.4" y="5.4" width="4.4" height="6.3" fill="#83beec" stroke="#106ebe" stroke-width="1.2"/><rect x="11.5" y="10.2" width="4.3" height="7.2" fill="#ffffff" stroke="#252423" stroke-width="1"/><rect x="11.5" y="2.5" width="4.3" height="7.7" fill="#c8c6c4" stroke="#8a8886" stroke-width="1"/></svg>
<svg class="a" style="left:1626px;top:273px;" width="18" height="18" viewBox="0 0 18 18"><path d="M0.600 0v17.400H18" fill="none" stroke="#484644" stroke-width="1.400"/><rect x="0.8" y="0.7" width="16.8" height="3.8" fill="#83beec" stroke="#106ebe" stroke-width="1.3"/><rect x="0.8" y="4.8" width="10" height="2.9" fill="#ffffff" stroke="#484644" stroke-width="1"/><rect x="0.8" y="8.9" width="7.2" height="2.9" fill="#c8c6c4" stroke="#8a8886" stroke-width="1"/><rect x="0.8" y="12.6" width="12.3" height="3.9" fill="#ffffff" stroke="#484644" stroke-width="1.1"/><path d="M0.800 17h13" stroke="#605e5c" stroke-width="1.600"/></svg>
<svg class="a" style="left:1654px;top:273px;" width="18" height="18" viewBox="0 0 18 18"><path d="M0.500 0v17.400H18" fill="none" stroke="#484644" stroke-width="1.400"/><rect x="1.4" y="0.6" width="4.3" height="16.8" fill="#83beec" stroke="#106ebe" stroke-width="1.2"/><rect x="5.8" y="7.6" width="2.8" height="9.8" fill="#ffffff" stroke="#484644" stroke-width="1"/><rect x="10.3" y="10.3" width="2.8" height="7.1" fill="#c8c6c4" stroke="#8a8886" stroke-width="1"/><rect x="13.5" y="5.2" width="4" height="12.2" fill="#ffffff" stroke="#484644" stroke-width="1.1"/></svg>
<svg class="a" style="left:1682px;top:273px;" width="18" height="18" viewBox="0 0 18 18"><path d="M0.6 0v17.4H18" fill="none" stroke="#252423" stroke-width="1.2"/><rect x="1.2" y="2.5" width="3.3" height="4.2" fill="#ffffff" stroke="#252423" stroke-width="1"/><rect x="4.5" y="2.5" width="11.2" height="4.2" fill="#83beec" stroke="#106ebe" stroke-width="1.2"/><rect x="1.2" y="10.6" width="9.2" height="4.2" fill="#ffffff" stroke="#252423" stroke-width="1"/><rect x="10.4" y="10.6" width="5.3" height="4.2" fill="#c8c6c4" stroke="#8a8886" stroke-width="1"/></svg>
<svg class="a" style="left:1710px;top:273px;" width="18" height="18" viewBox="0 0 18 18"><path d="M0.6 0v17.4H18" fill="none" stroke="#252423" stroke-width="1.2"/><rect x="3.4" y="13.7" width="4.4" height="3.7" fill="#ffffff" stroke="#252423" stroke-width="1"/><rect x="3.4" y="2.6" width="4.4" height="11.1" fill="#83beec" stroke="#106ebe" stroke-width="1.2"/><rect x="11.6" y="7.3" width="4.2" height="10.1" fill="#ffffff" stroke="#252423" stroke-width="1"/><rect x="11.6" y="2.6" width="4.2" height="4.7" fill="#c8c6c4" stroke="#8a8886" stroke-width="1"/></svg>
<svg class="a" style="left:1570px;top:301px;" width="18" height="18" viewBox="0 0 18 18"><path d="M0.6 0v17.4H18" fill="none" stroke="#252423" stroke-width="1.2"/><path d="M1 13.800L11.600 3.300l6.300 6.200" fill="none" stroke="#1a86d0" stroke-width="1.200"/><path d="M1 9l5.300-4.700 5.300 5 6.300-6" fill="none" stroke="#252423" stroke-width="1.200"/></svg>
<svg class="a" style="left:1598px;top:301px;" width="18" height="18" viewBox="0 0 18 18"><path d="M10.600 7.200L13.700 0.400l4 7.300v9.700z" fill="#c8c6c4" stroke="#8a8886" stroke-width="1"/><path d="M0.400 10.900L6.100 1.400l4.500 5.800" fill="#fafafa" stroke="#252423" stroke-width="1.200"/><path d="M0.500 10.900l4.300 4.200 5.800-7.900 7.100 10.200H0.500z" fill="#83beec" stroke="#106ebe" stroke-width="1.200" stroke-linejoin="round"/></svg>
<svg class="a" style="left:1626px;top:301px;" width="18" height="18" viewBox="0 0 18 18"><path d="M1 4l5 4.500 6.300-6.200 2.900 3.300h2.600v7.900l-5.500-5-6.300 6.300-5-4.700z" fill="#83beec" stroke="#106ebe" stroke-width="1.200" stroke-linejoin="round"/><path d="M1 10.100l5 4.700 6.300-6.300 5.500 5v3.900H1z" fill="#fafafa"/><path d="M0.6 0v17.4H18" fill="none" stroke="#252423" stroke-width="1.2"/></svg>
<svg class="a" style="left:1654px;top:301px;" width="18" height="18" viewBox="0 0 18 18"><path d="M1 2.700h16.900v10.800l-5.600-5-6.300 6.300-5-4.700z" fill="#83beec"/><path d="M1 10.100l5 4.700 6.300-6.300 5.600 5v3.900H1z" fill="#fafafa"/><path d="M1 2.700h16.900" stroke="#106ebe" stroke-width="1.400"/><path d="M1 10.100l5 4.700 6.300-6.300 5.600 5" fill="none" stroke="#106ebe" stroke-width="1.200"/><path d="M0.6 0v17.4H18" fill="none" stroke="#252423" stroke-width="1.2"/></svg>
<svg class="a" style="left:1682px;top:301px;" width="18" height="18" viewBox="0 0 18 18"><path d="M0.6 0v17.4H18" fill="none" stroke="#252423" stroke-width="1.2"/><rect x="3.4" y="13.5" width="4.4" height="3.9" fill="#ffffff" stroke="#252423" stroke-width="1"/><rect x="3.4" y="2.4" width="4.4" height="11.1" fill="#83beec" stroke="#106ebe" stroke-width="1.2"/><rect x="11.5" y="7.5" width="4.3" height="9.9" fill="#ffffff" stroke="#252423" stroke-width="1"/><rect x="11.5" y="2.4" width="4.3" height="5.1" fill="#c8c6c4" stroke="#8a8886" stroke-width="1"/><path d="M1 15.600L6.400 9l5 4.500 6.300-6" fill="none" stroke="#252423" stroke-width="1.200"/></svg>
<svg class="a" style="left:1710px;top:301px;" width="18" height="18" viewBox="0 0 18 18"><path d="M0.6 0v17.4H18" fill="none" stroke="#252423" stroke-width="1.2"/><rect x="3.3" y="8.4" width="4.4" height="9" fill="#83beec" stroke="#106ebe" stroke-width="1.2"/><rect x="7.8" y="1.5" width="4" height="15.9" fill="#ffffff" stroke="#252423" stroke-width="1.1"/><rect x="11.9" y="5.7" width="3.9" height="11.7" fill="#c8c6c4" stroke="#8a8886" stroke-width="1"/><path d="M1 15.600L6.300 9l5.200 5 6.300-6.500" fill="none" stroke="#252423" stroke-width="1.200"/></svg>
<svg class="a" style="left:1570px;top:329px;" width="18" height="18" viewBox="0 0 18 18"><path d="M2.400 11.400h4v4.200h-4zM12.600 11.400h4.200v4.200h-4.200z" fill="#f29a2e" stroke="#d86f0e" stroke-width="0.800"/><circle cx="9" cy="8.800" r="2.400" fill="#f29a2e"/><path d="M2.400 2.900l6.500 3.400 7.900-3.900v3.200L8.900 9.600 2.400 6.200z" fill="#bdbbb8" stroke="#8a8886" stroke-width="0.800"/><path d="M2.400 8.200c3 0 3.400 5.600 7 5.600 3.800 0 3.600-6.200 7.400-6.800" fill="none" stroke="#106ebe" stroke-width="2.600"/><path d="M2.400 8.200c3 0 3.400 5.600 7 5.600 3.800 0 3.600-6.200 7.400-6.800" fill="none" stroke="#83beec" stroke-width="0.900"/><path d="M0.6 0v17.4H18" fill="none" stroke="#252423" stroke-width="1.2"/></svg>
<svg class="a" style="left:1598px;top:329px;" width="18" height="18" viewBox="0 0 18 18"><path d="M0.6 0v17.4H18" fill="none" stroke="#252423" stroke-width="1.2"/><rect x="2.4" y="5.3" width="3.4" height="12.1" fill="#ffffff" stroke="#252423" stroke-width="1.1"/><path d="M5.800 5.300h3v5.300h1.400" fill="none" stroke="#8a8886" stroke-width="1.100"/><rect x="10.2" y="1.3" width="1.7" height="9.3" fill="#106ebe" stroke="#106ebe" stroke-width="0.4"/><rect x="13.9" y="1.4" width="2.8" height="16" fill="#ffffff" stroke="#252423" stroke-width="1.1"/><path d="M11.900 1.400h2" stroke="#252423" stroke-width="1.100"/></svg>
<svg class="a" style="left:1626px;top:329px;" width="18" height="18" viewBox="0 0 18 18"><rect x="0.7" y="1.5" width="16.7" height="5.1" fill="#83beec" stroke="#106ebe" stroke-width="1.3"/><rect x="2.6" y="6.6" width="13" height="5.1" fill="#83beec" stroke="#106ebe" stroke-width="1.3"/><rect x="5.8" y="11.7" width="6.6" height="4.7" fill="#83beec" stroke="#106ebe" stroke-width="1.3"/></svg>
<svg class="a" style="left:1654px;top:329px;" width="18" height="18" viewBox="0 0 18 18"><path d="M0.6 0v17.4H18" fill="none" stroke="#252423" stroke-width="1.2"/><rect x="3.1" y="4" width="3" height="3" fill="#7fbdee"/><rect x="8.1" y="6.9" width="3" height="3" fill="#7fbdee"/><rect x="13.1" y="10.9" width="3" height="3" fill="#7fbdee"/><rect x="13.1" y="1" width="3" height="3" fill="#252423"/><rect x="3.1" y="12" width="3" height="3" fill="#252423"/></svg>
<svg class="a" style="left:1682px;top:329px;" width="18" height="18" viewBox="0 0 18 18"><circle cx="9" cy="8.900" r="8.500" fill="#fafafa" stroke="#252423" stroke-width="1.100"/><path d="M8.500 0.400a8.500 8.500 0 0 1 6.300 14.700L8.500 9.100z" fill="#83beec" stroke="#106ebe" stroke-width="1.200" stroke-linejoin="round"/></svg>
<svg class="a" style="left:1710px;top:329px;" width="18" height="18" viewBox="0 0 18 18"><circle cx="9" cy="8.900" r="6.600" fill="none" stroke="#fafafa" stroke-width="3.800"/><circle cx="9" cy="8.900" r="8.500" fill="none" stroke="#252423" stroke-width="1"/><circle cx="9" cy="8.900" r="4.500" fill="none" stroke="#252423" stroke-width="1"/><path d="M9.300 0.400a8.500 8.500 0 1 1-8.800 8.500h4a4.600 4.600 0 1 0 4.800-4.500z" fill="#83beec" stroke="#106ebe" stroke-width="1.200" stroke-linejoin="round"/></svg>
<svg class="a" style="left:1570px;top:357px;" width="18" height="18" viewBox="0 0 18 18"><rect x="0.5" y="0.4" width="17.3" height="17.2" fill="#ffffff" stroke="#252423" stroke-width="1.2"/><rect x="0.6" y="0.5" width="8.2" height="8.7" fill="#83beec" stroke="#106ebe" stroke-width="1.3"/><rect x="0.6" y="9.2" width="8.2" height="8.3" fill="#83beec" stroke="#106ebe" stroke-width="1.3"/><path d="M8.800 5.200h9M12.400 5.200v12.400M12.400 11.700h5.400" fill="none" stroke="#252423" stroke-width="1.100"/></svg>
<svg class="a" style="left:1598px;top:357px;" width="18" height="18" viewBox="0 0 18 18"><circle cx="10.400" cy="7.700" r="5.300" fill="#fff" stroke="#252423" stroke-width="1.100"/><path d="M7.200 5.200c1-1.600 2.400-2 3.400-2l-0.400 2.400-2 1.600zM12 3.400l2.400 1.600 0.400 2-1.800-0.400-1.400-1.600zM8.200 9.800l3.400-0.800 1.600 1.400-1 2.200-2.400-0.400z" fill="#2e9c47" stroke="#2e9c47" stroke-width="0.600"/><path d="M9.600 0.200C5.600 0.800 2.800 4 2.800 7.800c0 4.200 3.400 7.600 7.600 7.600 2.400 0 4.400-1 5.800-2.700" fill="none" stroke="#252423" stroke-width="1.100"/><path d="M10.200 15.400v2.200M3.600 17.500h12.600" stroke="#252423" stroke-width="1.100"/></svg>
<svg class="a" style="left:1626px;top:357px;" width="18" height="18" viewBox="0 0 18 18"><path d="M8.600 5.600l3.400-2.400 1.200-1.600h4.400v7.200H9.600z" fill="#c8c6c4" stroke="#605e5c" stroke-width="1"/><path d="M0.600 8.600h8.800l-0.800 4.400 0.400 3.400-3.200-1.200C2.600 13.600 0.600 11.400 0.600 8.600z" fill="#c8c6c4" stroke="#605e5c" stroke-width="1"/><path d="M0.600 1.400h5.200c1 1.600 1.800 3 2 4.200l-0.200 3H0.800c0.800-2.400 0.800-4.800-0.200-7.200z" fill="#83beec" stroke="#106ebe" stroke-width="1.200" stroke-linejoin="round"/><path d="M9.800 8.800h7.800c0 3.600-1.600 5.600-4.200 6.600l-1.200-0.600-1 0.800-1-0.400-1.200 1.200c-0.600-3 0-5.400 0.800-7.600z" fill="#83beec" stroke="#106ebe" stroke-width="1.200" stroke-linejoin="round"/></svg>
<svg class="a" style="left:1654px;top:357px;" width="18" height="18" viewBox="0 0 18 18"><path d="M12.300-1L1 16.700l9.800-4.200z" fill="#3a9fc9"/><path d="M12.300-1l-1.500 13.500 6 6.300z" fill="#55b3d8"/><path d="M10.800 12.500l-2.600 1.100 8.600 5.200z" fill="#0a78d4"/></svg>
<svg class="a" style="left:1682px;top:357px;" width="18" height="18" viewBox="0 0 18 18"><path d="M0.400 12.700a8.600 8.600 0 0 1 17.200 0h-4.500a4.100 4.100 0 0 0-8.200 0z" fill="#fff" stroke="#252423" stroke-width="1.100" stroke-linejoin="round"/><path d="M4.600 5.300a8.600 8.600 0 0 1 13 7.400h-4.500a4.100 4.100 0 0 0-6.200-3.500z" fill="#83beec" stroke="#106ebe" stroke-width="1.200" stroke-linejoin="round"/><path d="M9 12l4.600-4.700" stroke="#252423" stroke-width="1.300"/><circle cx="9" cy="12" r="1.300" fill="#252423"/></svg>
<svg class="a" style="left:1710px;top:357px;" width="18" height="18" viewBox="0 0 18 18"><rect x="0.7" y="2.9" width="16.8" height="12.6" fill="#ffffff" stroke="#252423" stroke-width="1.3"/><path d="M2.500 13.600h13.200" stroke="#605e5c" stroke-width="0.900"/><text x="2.200" y="11.600" font-family="Liberation Sans,sans-serif" font-size="8.600" fill="#2b88d8" textLength="13.600" lengthAdjust="spacingAndGlyphs">123</text></svg>
<svg class="a" style="left:1570px;top:385px;" width="18" height="18" viewBox="0 0 18 18"><rect x="0.7" y="0.9" width="16.7" height="16.3" fill="#ffffff" stroke="#252423" stroke-width="1.3"/><path d="M3.500 3.400v11.600" stroke="#8a8886" stroke-width="0.900"/><path d="M5 5h9.800M5 11h9.800" stroke="#0f5cb8" stroke-width="1.700"/><path d="M5 7.500h4.600M5 13.500h4.600" stroke="#8a8886" stroke-width="0.900"/></svg>
<svg class="a" style="left:1598px;top:385px;" width="18" height="18" viewBox="0 0 18 18"><rect x="0.6" y="1.7" width="16.9" height="13.8" fill="#ffffff" stroke="#252423" stroke-width="1.3"/><path d="M2.800 9.600l3-5.200 3 5.200z" fill="#7fd08f" stroke="#2e9c47" stroke-width="1"/><path d="M9.700 4.600h6l-3 5.200z" fill="#f58a8f" stroke="#e0262e" stroke-width="1"/><path d="M2.600 12.500h13" stroke="#605e5c" stroke-width="0.900"/></svg>
<svg class="a" style="left:1626px;top:385px;" width="18" height="18" viewBox="0 0 18 18"><rect x="1" y="1" width="16.300" height="2.600" fill="#c8c6c4"/><path d="M11 17.100H0.900V0.900h16.700v7.400" fill="none" stroke="#252423" stroke-width="1.200"/><path d="M0.900 3.800h16.700" stroke="#605e5c" stroke-width="0.900"/><rect x="3.3" y="6.5" width="3.3" height="3.2" fill="#e1dfdd" stroke="#797775" stroke-width="1"/><rect x="3.3" y="11.5" width="3.3" height="3.2" fill="#e1dfdd" stroke="#797775" stroke-width="1"/><path transform="translate(9.3 9.5)" d="M0 0h9.6l-3.600 4.400v4.700h-2.400v-4.700z" fill="#fff" stroke="#252423" stroke-width="1.200" stroke-linejoin="miter"/></svg>
<svg class="a" style="left:1654px;top:385px;" width="18" height="18" viewBox="0 0 18 18"><rect x="0.7" y="0.9" width="16.7" height="16.3" fill="#ffffff" stroke="#252423" stroke-width="1.4"/><rect x="1.300" y="1.500" width="15.500" height="2.400" fill="#c8c6c4"/><path d="M1 4.200h16M1 8.400h16M1 12.600h16M6.400 4.200v13M11.600 4.200v13" fill="none" stroke="#8a8886" stroke-width="0.800"/></svg>
<svg class="a" style="left:1682px;top:385px;" width="18" height="18" viewBox="0 0 18 18"><rect x="0.7" y="0.9" width="16.7" height="16.3" fill="#ffffff" stroke="#252423" stroke-width="1.4"/><rect x="1.300" y="1.500" width="15.500" height="2.400" fill="#c8c6c4"/><rect x="11.800" y="4.300" width="5" height="12.400" fill="#83beec"/><rect x="1.300" y="11.800" width="15.500" height="4.900" fill="#83beec"/><path d="M1 4.200h16M1 8h16M6.600 4.200v13M11.600 4.200v13" fill="none" stroke="#605e5c" stroke-width="0.900"/><path d="M1 11.700h16" stroke="#106ebe" stroke-width="1.100"/><path d="M11.700 4.200v13M6.600 11.700v5.300" stroke="#106ebe" stroke-width="0.900"/></svg>
<svg class="a" style="left:1710px;top:385px;" width="18" height="18" viewBox="0 0 18 18"><text x="3.300" y="14.700" font-family="Liberation Sans,sans-serif" font-weight="700" font-size="16.500" fill="#1a86d0" textLength="9.600" lengthAdjust="spacingAndGlyphs">R</text></svg>
<svg class="a" style="left:1570px;top:413px;" width="18" height="18" viewBox="0 0 18 18"><text x="-0.400" y="13" font-family="Liberation Sans,sans-serif" font-weight="700" font-size="16.500" fill="#1a86d0" textLength="18.600" lengthAdjust="spacingAndGlyphs">Py</text></svg>
<svg class="a" style="left:1598px;top:413px;" width="18" height="18" viewBox="0 0 18 18"><path d="M0.6 0v17.4H18" fill="none" stroke="#252423" stroke-width="1.2"/><path d="M1 3.600h11.600" stroke="#1a86d0" stroke-width="1.100"/><circle cx="14.600" cy="3.600" r="2.100" fill="#83beec" stroke="#106ebe" stroke-width="1.100"/><path d="M1 8.500h8.600M1 12.600h4.600" stroke="#605e5c" stroke-width="1"/><rect x="9.7" y="7.5" width="2.1" height="2.1" fill="#e1dfdd" stroke="#605e5c" stroke-width="0.9"/><rect x="5.7" y="11.6" width="2.1" height="2.1" fill="#e1dfdd" stroke="#605e5c" stroke-width="0.9"/></svg>
<svg class="a" style="left:1626px;top:413px;" width="18" height="18" viewBox="0 0 18 18"><path d="M6.800 8.500h4.400M11.200 2.500H9.200v12h2" fill="none" stroke="#252423" stroke-width="1.100"/><rect x="0.6" y="6.5" width="6.2" height="4" fill="#83beec" stroke="#106ebe" stroke-width="1.2"/><rect x="11.4" y="0.7" width="6.2" height="3.8" fill="#83beec" stroke="#106ebe" stroke-width="1.2"/><rect x="11.4" y="6.6" width="6.2" height="3.8" fill="#83beec" stroke="#106ebe" stroke-width="1.2"/><rect x="11.4" y="12.5" width="6.2" height="3.8" fill="#83beec" stroke="#106ebe" stroke-width="1.2"/></svg>
<svg class="a" style="left:1654px;top:413px;" width="18" height="18" viewBox="0 0 18 18"><path d="M0.700 1.600h17v11h-9.600L3.600 17v-4.400H0.700z" fill="#fafafa" stroke="#106ebe" stroke-width="1.300" stroke-linejoin="miter"/></svg>
<svg class="a" style="left:1682px;top:413px;" width="18" height="18" viewBox="0 0 18 18"><path d="M2.400 5V0.700h8.200l5 5v11.600H2.400V9" fill="#fafafa" stroke="#252423" stroke-width="1.200"/><path d="M10.600 0.700v5h5" fill="none" stroke="#252423" stroke-width="1.100"/><circle cx="2.900" cy="7" r="1.500" fill="#83beec" stroke="#106ebe" stroke-width="1"/><path d="M7.200 8.600h5.800M5.200 11.600h5.800" stroke="#2b88d8" stroke-width="1"/></svg>
<svg class="a" style="left:1710px;top:413px;" width="18" height="18" viewBox="0 0 18 18"><path d="M4.600 1.400h9v5.200c0 3-2 5.200-4.500 5.200S4.600 9.600 4.600 6.600z" fill="#fafafa" stroke="#252423" stroke-width="1.200"/><path d="M4.600 1.800H0.700v2.400c0 2 1.600 3.600 4 4M13.600 1.800h3.900v2.400c0 2-1.600 3.600-4 4" fill="none" stroke="#252423" stroke-width="1.200"/><path d="M7.600 11.600c0 1.600-0.800 2.800-1.800 3.600h6.600c-1-0.800-1.800-2-1.800-3.600" fill="none" stroke="#252423" stroke-width="1.100"/><rect x="4.7" y="0.8" width="8.8" height="1.4" fill="#83beec" stroke="#106ebe" stroke-width="1"/><rect x="4.5" y="15.5" width="9.2" height="1.7" fill="#83beec" stroke="#106ebe" stroke-width="1"/></svg>
<svg class="a" style="left:1570px;top:441px;" width="18" height="18" viewBox="0 0 18 18"><path d="M1.600-0.400h8.800l5.200 5.200v13.600H1.600z" fill="#fafafa" stroke="#3b3a39" stroke-width="1.400"/><path d="M10.400-0.400v5.200h5.200" fill="none" stroke="#3b3a39" stroke-width="1.100"/><path d="M4.300 10.600h2v5.600h-2zM8.200 13.400h2v2.800h-2zM12 8h2v8.200h-2z" fill="#3b3a39"/><path d="M1.600 18.700h14" stroke="#8a8886" stroke-width="0.800"/></svg>
<svg class="a" style="left:1598px;top:441px;" width="18" height="18" viewBox="0 0 18 18"><rect x="0.7" y="2.8" width="16.8" height="12.8" fill="#fafafa" stroke="#252423" stroke-width="1.2"/><path d="M2.600 13.700h13" stroke="#605e5c" stroke-width="0.900"/><text x="3" y="11.800" font-family="Liberation Sans,sans-serif" font-size="8.400" fill="#2b88d8" textLength="13" lengthAdjust="spacingAndGlyphs">123</text><rect x="-0.800" y="-1" width="7" height="6" fill="#f3f2f1"/><path transform="translate(-1.2 -1.2) scale(0.95)" d="M4.6 0h5.2L7 4.6h3L1 12.600l2.800-6.200H0.6z" fill="#fbd27a" stroke="#e07a10" stroke-width="1" stroke-linejoin="miter"/></svg>
<svg class="a" style="left:1626px;top:441px;" width="18" height="18" viewBox="0 0 18 18"><rect x="9.8" y="0.7" width="6.8" height="6.4" fill="#fafafa" stroke="#797775" stroke-width="1"/><rect x="0.6" y="9.8" width="7" height="6.8" fill="#fafafa" stroke="#797775" stroke-width="1"/><rect x="4.8" y="4" width="2.8" height="3.6" fill="#2b88d8" stroke="#106ebe" stroke-width="0.6"/><path d="M9.800 13v3.600h1.600" fill="none" stroke="#797775" stroke-width="1"/><path transform="translate(9.3 9.7)" d="M0 0h9.6l-3.600 4.400v4.700h-2.400v-4.700z" fill="#fff" stroke="#252423" stroke-width="1.200" stroke-linejoin="miter"/><path transform="translate(-1.2 -1.2) scale(0.95)" d="M4.6 0h5.2L7 4.6h3L1 12.600l2.800-6.200H0.6z" fill="#fbd27a" stroke="#e07a10" stroke-width="1" stroke-linejoin="miter"/></svg>
<svg class="a" style="left:1654px;top:441px;" width="18" height="18" viewBox="0 0 18 18"><path d="M6.600 0.900h10.800v8M13 17.100H0.700V11" fill="none" stroke="#106ebe" stroke-width="1.400"/><path d="M16.600 2.600h-2.400l-1.200 2.200-2.400 0.400-1 2.800-2.200 1.200-0.400 4.200-2.200 2.600h5.400l1.200-2.800 2.600-1.400 0.600-3.200 2-1.200z" fill="#83beec" stroke="#3a96dd" stroke-width="0.800"/><path d="M0.400 0h4.800v6.600L2.800 9.400 0.400 6.600z" fill="#e07010"/><circle cx="2.800" cy="3.200" r="1.100" fill="#fff"/><circle cx="15" cy="15.200" r="2.600" fill="#e07010"/><rect x="16" y="9.400" width="2.400" height="2.400" fill="#e07010"/></svg>
<svg class="a" style="left:1682px;top:441px;" width="18" height="18" viewBox="0 0 18 18"><g fill="#fafafa" stroke="#a33bb0" stroke-width="1.100" stroke-linejoin="round"><path d="M7.600 0.600l-7 8.400 7 8.200 2.200-2.600-4.800-5.600 4.800-5.800z"/><path d="M10.600 0.600l7 8.400-7 8.200-7-8.200z"/><path d="M7.100 4.800l7 8.300M14.100 4.800l-7 8.300"/></g></svg>
<svg class="a" style="left:1710px;top:441px;" width="18" height="18" viewBox="0 0 18 18"><g fill="#fafafa" stroke="#1a7fe0" stroke-width="1.100" stroke-linejoin="round"><path d="M0.600 1.600h12l5.400 7.300-5.400 7.300h-12l6.400-7.300z"/><path d="M10 1.800L1 15.900M14.600 4.600L6.400 16"/></g></svg>
<!-- s6_data -->
<span class="t" style="left:1747.26px;top:172px;font-size:15.5px;line-height:15.5px;color:#252423;-webkit-text-stroke:0.42px #252423;letter-spacing:0.65px;">Data</span>
<svg class="a" style="left:1899.5px;top:172.5px;" width="14" height="13" viewBox="0 0 14 13"><path d="M1.4 1l5.4 5.5L1.4 12M7.6 1L13 6.5 7.6 12" fill="none" stroke="#252423" stroke-width="1.3"/></svg>
<div class="a" style="left:1740px;top:237.5px;width:179px;height:769.5px;overflow:hidden;"><div class="a" style="left:-1740px;top:-237.5px;">
<div class="a" style="left:1784px;top:236px;width:12px;height:12px;border:1px solid #8a8886;box-sizing:border-box;border-radius:2px;background:#f8f7f6;"></div>
<span class="t" style="left:1821.04px;top:237px;font-size:12px;line-height:12px;color:#252423;letter-spacing:-0.08px;">Product Categ...</span>
<div class="a" style="left:1784px;top:260px;width:12px;height:12px;border:1px solid #8a8886;box-sizing:border-box;border-radius:2px;background:#f8f7f6;"></div>
<span class="t" style="left:1821.76px;top:261px;font-size:12px;line-height:12px;color:#252423;letter-spacing:-0.35px;">Total Sales</span>
<svg class="a" style="left:1753px;top:286.5px;" width="12" height="7" viewBox="0 0 12 7"><path d="M0.6 0.6l5.4 5.4 5.4-5.4" fill="none" stroke="#605e5c" stroke-width="1"/></svg>
<svg class="a" style="left:1768.5px;top:283.5px;" width="13" height="13" viewBox="0 0 13 13"><g fill="none" stroke="#252423" stroke-width="1.1"><rect x="0.8" y="0.8" width="11.4" height="11.4" rx="2.4"/><path d="M0.8 4.6h11.4M0.8 8.4h11.4M4.6 0.8v11.4M8.4 0.8v11.4"/></g></svg>
<span class="t" style="left:1787.06px;top:285px;font-size:12px;line-height:12px;color:#252423;letter-spacing:-0.28px;">Table (2)</span>
<div class="a" style="left:1784px;top:308px;width:12px;height:12px;border:1px solid #8a8886;box-sizing:border-box;border-radius:2px;background:#f8f7f6;"></div>
<span class="t" style="left:1821.4px;top:309px;font-size:12px;line-height:12px;color:#252423;letter-spacing:0.01px;">Custom</span>
<svg class="a" style="left:1768px;top:334.5px;" width="12" height="7" viewBox="0 0 12 7"><path d="M0.6 0.6l5.4 5.4 5.4-5.4" fill="none" stroke="#605e5c" stroke-width="1"/></svg>
<div class="a" style="left:1784px;top:332px;width:12px;height:12px;border:1px solid #8a8886;box-sizing:border-box;border-radius:2px;background:#f8f7f6;"></div>
<svg class="a" style="left:1803.3px;top:331.5px;" width="13" height="13" viewBox="0 0 13 13"><g fill="none" stroke="#252423" stroke-width="1.1"><rect x="0.8" y="0.8" width="11.4" height="11.4" rx="2.6"/><path d="M0.8 4.2h11.4"/></g><g fill="#252423"><rect x="3" y="6" width="1.6" height="1.4"/><rect x="5.7" y="6" width="1.6" height="1.4"/><rect x="8.4" y="6" width="1.6" height="1.4"/><rect x="3" y="8.6" width="1.6" height="1.4"/><rect x="5.7" y="8.6" width="1.6" height="1.4"/></g></svg>
<span class="t" style="left:1821.46px;top:333px;font-size:12px;line-height:12px;color:#252423;letter-spacing:0.07px;">OrderDate</span>
<svg class="a" style="left:1783px;top:358.5px;" width="12" height="7" viewBox="0 0 12 7"><path d="M0.6 0.6l5.4 5.4 5.4-5.4" fill="none" stroke="#605e5c" stroke-width="1"/></svg>
<div class="a" style="left:1799px;top:356px;width:12px;height:12px;border:1px solid #8a8886;box-sizing:border-box;border-radius:2px;background:#f8f7f6;"></div>
<svg class="a" style="left:1819.3px;top:353.4px;" width="11" height="16" viewBox="0 0 11 16"><g fill="none" stroke="#252423" stroke-width="1.1"><rect x="0.8" y="0.8" width="2.8" height="2.8"/><rect x="6.6" y="6.4" width="2.8" height="2.8"/><rect x="6.6" y="11.8" width="2.8" height="2.8"/><path d="M2.2 3.6v9.6h4.4M2.2 7.8h4.4"/></g></svg>
<span class="t" style="left:1836.04px;top:357px;font-size:12px;line-height:12px;color:#252423;letter-spacing:-0.02px;">Date Hierar...</span>
<div class="a" style="left:1814px;top:380px;width:12px;height:12px;border:1px solid #8a8886;box-sizing:border-box;border-radius:2px;background:#f8f7f6;"></div>
<span class="t" style="left:1851.76px;top:381px;font-size:12px;line-height:12px;color:#252423;letter-spacing:-0.53px;">Year</span>
<div class="a" style="left:1814px;top:404px;width:12px;height:12px;border:1px solid #8a8886;box-sizing:border-box;border-radius:2px;background:#f8f7f6;"></div>
<span class="t" style="left:1851.46px;top:405px;font-size:12px;line-height:12px;color:#252423;letter-spacing:0.09px;">Quarter</span>
<div class="a" style="left:1814px;top:428px;width:12px;height:12px;border:1px solid #8a8886;box-sizing:border-box;border-radius:2px;background:#f8f7f6;"></div>
<span class="t" style="left:1851.04px;top:429px;font-size:12px;line-height:12px;color:#252423;letter-spacing:0.83px;">Month</span>
<div class="a" style="left:1814px;top:452px;width:12px;height:12px;border:1px solid #8a8886;box-sizing:border-box;border-radius:2px;background:#f8f7f6;"></div>
<span class="t" style="left:1851.04px;top:453px;font-size:12px;line-height:12px;color:#252423;letter-spacing:-0.45px;">Day</span>
<div class="a" style="left:1784px;top:476px;width:12px;height:12px;border:1px solid #8a8886;box-sizing:border-box;border-radius:2px;background:#f8f7f6;"></div>
<svg class="a" style="left:1804px;top:475.5px;" width="12" height="13" viewBox="0 0 12 13"><path d="M10.6 2.6V0.8H1l4.8 5.6L1 12.2h9.8v-1.9" fill="none" stroke="#252423" stroke-width="1.1" stroke-linejoin="miter"/></svg>
<span class="t" style="left:1821.46px;top:477px;font-size:12px;line-height:12px;color:#252423;letter-spacing:0.07px;">OrderID</span>
<svg class="a" style="left:1768px;top:502.5px;" width="12" height="7" viewBox="0 0 12 7"><path d="M0.6 0.6l5.4 5.4 5.4-5.4" fill="none" stroke="#605e5c" stroke-width="1"/></svg>
<div class="a" style="left:1784px;top:500px;width:12px;height:12px;border:1px solid #8a8886;box-sizing:border-box;border-radius:2px;background:#f8f7f6;"></div>
<svg class="a" style="left:1803.3px;top:499.5px;" width="13" height="13" viewBox="0 0 13 13"><g fill="none" stroke="#252423" stroke-width="1.1"><rect x="0.8" y="0.8" width="11.4" height="11.4" rx="2.6"/><path d="M0.8 4.2h11.4"/></g><g fill="#252423"><rect x="3" y="6" width="1.6" height="1.4"/><rect x="5.7" y="6" width="1.6" height="1.4"/><rect x="8.4" y="6" width="1.6" height="1.4"/><rect x="3" y="8.6" width="1.6" height="1.4"/><rect x="5.7" y="8.6" width="1.6" height="1.4"/></g></svg>
<span class="t" style="left:1821.46px;top:501px;font-size:12px;line-height:12px;color:#252423;letter-spacing:-0.12px;">ShipDate</span>
<svg class="a" style="left:1783px;top:526.5px;" width="12" height="7" viewBox="0 0 12 7"><path d="M0.6 0.6l5.4 5.4 5.4-5.4" fill="none" stroke="#605e5c" stroke-width="1"/></svg>
<div class="a" style="left:1799px;top:524px;width:12px;height:12px;border:1px solid #8a8886;box-sizing:border-box;border-radius:2px;background:#f8f7f6;"></div>
<svg class="a" style="left:1819.3px;top:521.4px;" width="11" height="16" viewBox="0 0 11 16"><g fill="none" stroke="#252423" stroke-width="1.1"><rect x="0.8" y="0.8" width="2.8" height="2.8"/><rect x="6.6" y="6.4" width="2.8" height="2.8"/><rect x="6.6" y="11.8" width="2.8" height="2.8"/><path d="M2.2 3.6v9.6h4.4M2.2 7.8h4.4"/></g></svg>
<span class="t" style="left:1836.04px;top:525px;font-size:12px;line-height:12px;color:#252423;letter-spacing:-0.02px;">Date Hierar...</span>
<div class="a" style="left:1814px;top:548px;width:12px;height:12px;border:1px solid #8a8886;box-sizing:border-box;border-radius:2px;background:#f8f7f6;"></div>
<span class="t" style="left:1851.76px;top:549px;font-size:12px;line-height:12px;color:#252423;letter-spacing:-0.53px;">Year</span>
<div class="a" style="left:1814px;top:572px;width:12px;height:12px;border:1px solid #8a8886;box-sizing:border-box;border-radius:2px;background:#f8f7f6;"></div>
<span class="t" style="left:1851.46px;top:573px;font-size:12px;line-height:12px;color:#252423;letter-spacing:0.09px;">Quarter</span>
<div class="a" style="left:1814px;top:596px;width:12px;height:12px;border:1px solid #8a8886;box-sizing:border-box;border-radius:2px;background:#f8f7f6;"></div>
<span class="t" style="left:1851.04px;top:597px;font-size:12px;line-height:12px;color:#252423;letter-spacing:0.83px;">Month</span>
<div class="a" style="left:1814px;top:620px;width:12px;height:12px;border:1px solid #8a8886;box-sizing:border-box;border-radius:2px;background:#f8f7f6;"></div>
<span class="t" style="left:1851.04px;top:621px;font-size:12px;line-height:12px;color:#252423;letter-spacing:-0.45px;">Day</span>
<svg class="a" style="left:1753px;top:646.5px;" width="12" height="7" viewBox="0 0 12 7"><path d="M0.6 0.6l5.4 5.4 5.4-5.4" fill="none" stroke="#605e5c" stroke-width="1"/></svg>
<svg class="a" style="left:1768.5px;top:643.5px;" width="13" height="13" viewBox="0 0 13 13"><g fill="none" stroke="#252423" stroke-width="1.1"><rect x="0.8" y="0.8" width="11.4" height="11.4" rx="2.4"/><path d="M0.8 4.6h11.4M0.8 8.4h11.4M4.6 0.8v11.4M8.4 0.8v11.4"/></g></svg>
<span class="t" style="left:1787.06px;top:645px;font-size:12px;line-height:12px;color:#252423;letter-spacing:-0.28px;">Table (3)</span>
<svg class="a" style="left:1775px;top:650px;" width="12" height="12" viewBox="0 0 12 12"><circle cx="6" cy="6" r="6" fill="#117865"/><path d="M3.4 6.2l1.9 1.9 3.4-3.6" fill="none" stroke="#fff" stroke-width="1.2"/></svg>
<svg class="a" style="left:1784px;top:668px;" width="12" height="12" viewBox="0 0 12 12"><rect x="0" y="0" width="12" height="12" rx="1.5" fill="#117865"/><path d="M2.6 6.2l2.4 2.4 4.6-4.8" fill="none" stroke="#fff" stroke-width="1.4"/></svg>
<svg class="a" style="left:1804px;top:667.5px;" width="12" height="13" viewBox="0 0 12 13"><path d="M10.6 2.6V0.8H1l4.8 5.6L1 12.2h9.8v-1.9" fill="none" stroke="#252423" stroke-width="1.1" stroke-linejoin="miter"/></svg>
<span class="t" style="left:1822px;top:669px;font-size:12px;line-height:12px;color:#252423;letter-spacing:0.23px;">Amount</span>
<svg class="a" style="left:1768px;top:694.5px;" width="12" height="7" viewBox="0 0 12 7"><path d="M0.6 0.6l5.4 5.4 5.4-5.4" fill="none" stroke="#605e5c" stroke-width="1"/></svg>
<svg class="a" style="left:1784px;top:692px;" width="12" height="12" viewBox="0 0 12 12"><rect x="0" y="0" width="12" height="12" rx="1.5" fill="#117865"/><path d="M2.6 6.2l2.4 2.4 4.6-4.8" fill="none" stroke="#fff" stroke-width="1.4"/></svg>
<svg class="a" style="left:1803.3px;top:691.5px;" width="13" height="13" viewBox="0 0 13 13"><g fill="none" stroke="#252423" stroke-width="1.1"><rect x="0.8" y="0.8" width="11.4" height="11.4" rx="2.6"/><path d="M0.8 4.2h11.4"/></g><g fill="#252423"><rect x="3" y="6" width="1.6" height="1.4"/><rect x="5.7" y="6" width="1.6" height="1.4"/><rect x="8.4" y="6" width="1.6" height="1.4"/><rect x="3" y="8.6" width="1.6" height="1.4"/><rect x="5.7" y="8.6" width="1.6" height="1.4"/></g></svg>
<span class="t" style="left:1821.46px;top:693px;font-size:12px;line-height:12px;color:#252423;letter-spacing:0.07px;">OrderDate</span>
<svg class="a" style="left:1810.1px;top:698px;" width="12" height="12" viewBox="0 0 12 12"><circle cx="6" cy="6" r="6" fill="#117865"/><path d="M3.4 6.2l1.9 1.9 3.4-3.6" fill="none" stroke="#fff" stroke-width="1.2"/></svg>
<svg class="a" style="left:1783px;top:718.5px;" width="12" height="7" viewBox="0 0 12 7"><path d="M0.6 0.6l5.4 5.4 5.4-5.4" fill="none" stroke="#605e5c" stroke-width="1"/></svg>
<svg class="a" style="left:1799px;top:716px;" width="12" height="12" viewBox="0 0 12 12"><rect x="0" y="0" width="12" height="12" rx="1.5" fill="#117865"/><path d="M2.6 6.2l2.4 2.4 4.6-4.8" fill="none" stroke="#fff" stroke-width="1.4"/></svg>
<svg class="a" style="left:1819.3px;top:713.4px;" width="11" height="16" viewBox="0 0 11 16"><g fill="none" stroke="#252423" stroke-width="1.1"><rect x="0.8" y="0.8" width="2.8" height="2.8"/><rect x="6.6" y="6.4" width="2.8" height="2.8"/><rect x="6.6" y="11.8" width="2.8" height="2.8"/><path d="M2.2 3.6v9.6h4.4M2.2 7.8h4.4"/></g></svg>
<span class="t" style="left:1836.04px;top:717px;font-size:12px;line-height:12px;color:#252423;letter-spacing:-0.02px;">Date Hierar...</span>
<svg class="a" style="left:1825px;top:722px;" width="12" height="12" viewBox="0 0 12 12"><circle cx="6" cy="6" r="6" fill="#117865"/><path d="M3.4 6.2l1.9 1.9 3.4-3.6" fill="none" stroke="#fff" stroke-width="1.2"/></svg>
<svg class="a" style="left:1814px;top:740px;" width="12" height="12" viewBox="0 0 12 12"><rect x="0" y="0" width="12" height="12" rx="1.5" fill="#117865"/><path d="M2.6 6.2l2.4 2.4 4.6-4.8" fill="none" stroke="#fff" stroke-width="1.4"/></svg>
<span class="t" style="left:1851.76px;top:741px;font-size:12px;line-height:12px;color:#252423;letter-spacing:-0.53px;">Year</span>
<svg class="a" style="left:1814px;top:764px;" width="12" height="12" viewBox="0 0 12 12"><rect x="0" y="0" width="12" height="12" rx="1.5" fill="#117865"/><path d="M2.6 6.2l2.4 2.4 4.6-4.8" fill="none" stroke="#fff" stroke-width="1.4"/></svg>
<span class="t" style="left:1851.46px;top:765px;font-size:12px;line-height:12px;color:#252423;letter-spacing:0.09px;">Quarter</span>
<svg class="a" style="left:1814px;top:788px;" width="12" height="12" viewBox="0 0 12 12"><rect x="0" y="0" width="12" height="12" rx="1.5" fill="#117865"/><path d="M2.6 6.2l2.4 2.4 4.6-4.8" fill="none" stroke="#fff" stroke-width="1.4"/></svg>
<span class="t" style="left:1851.04px;top:789px;font-size:12px;line-height:12px;color:#252423;letter-spacing:0.83px;">Month</span>
<svg class="a" style="left:1814px;top:812px;" width="12" height="12" viewBox="0 0 12 12"><rect x="0" y="0" width="12" height="12" rx="1.5" fill="#117865"/><path d="M2.6 6.2l2.4 2.4 4.6-4.8" fill="none" stroke="#fff" stroke-width="1.4"/></svg>
<span class="t" style="left:1851.04px;top:813px;font-size:12px;line-height:12px;color:#252423;letter-spacing:-0.45px;">Day</span>
<svg class="a" style="left:1784px;top:836px;" width="12" height="12" viewBox="0 0 12 12"><rect x="0" y="0" width="12" height="12" rx="1.5" fill="#117865"/><path d="M2.6 6.2l2.4 2.4 4.6-4.8" fill="none" stroke="#fff" stroke-width="1.4"/></svg>
<svg class="a" style="left:1804px;top:835.5px;" width="12" height="13" viewBox="0 0 12 13"><path d="M10.6 2.6V0.8H1l4.8 5.6L1 12.2h9.8v-1.9" fill="none" stroke="#252423" stroke-width="1.1" stroke-linejoin="miter"/></svg>
<span class="t" style="left:1821.46px;top:837px;font-size:12px;line-height:12px;color:#252423;letter-spacing:0.07px;">OrderID</span>
<svg class="a" style="left:1768px;top:862.5px;" width="12" height="7" viewBox="0 0 12 7"><path d="M0.6 0.6l5.4 5.4 5.4-5.4" fill="none" stroke="#605e5c" stroke-width="1"/></svg>
<svg class="a" style="left:1784px;top:860px;" width="12" height="12" viewBox="0 0 12 12"><rect x="0" y="0" width="12" height="12" rx="1.5" fill="#117865"/><path d="M2.6 6.2l2.4 2.4 4.6-4.8" fill="none" stroke="#fff" stroke-width="1.4"/></svg>
<svg class="a" style="left:1803.3px;top:859.5px;" width="13" height="13" viewBox="0 0 13 13"><g fill="none" stroke="#252423" stroke-width="1.1"><rect x="0.8" y="0.8" width="11.4" height="11.4" rx="2.6"/><path d="M0.8 4.2h11.4"/></g><g fill="#252423"><rect x="3" y="6" width="1.6" height="1.4"/><rect x="5.7" y="6" width="1.6" height="1.4"/><rect x="8.4" y="6" width="1.6" height="1.4"/><rect x="3" y="8.6" width="1.6" height="1.4"/><rect x="5.7" y="8.6" width="1.6" height="1.4"/></g></svg>
<span class="t" style="left:1821.46px;top:861px;font-size:12px;line-height:12px;color:#252423;letter-spacing:-0.12px;">ShipDate</span>
<svg class="a" style="left:1810.1px;top:866px;" width="12" height="12" viewBox="0 0 12 12"><circle cx="6" cy="6" r="6" fill="#117865"/><path d="M3.4 6.2l1.9 1.9 3.4-3.6" fill="none" stroke="#fff" stroke-width="1.2"/></svg>
<svg class="a" style="left:1783px;top:886.5px;" width="12" height="7" viewBox="0 0 12 7"><path d="M0.6 0.6l5.4 5.4 5.4-5.4" fill="none" stroke="#605e5c" stroke-width="1"/></svg>
<svg class="a" style="left:1799px;top:884px;" width="12" height="12" viewBox="0 0 12 12"><rect x="0" y="0" width="12" height="12" rx="1.5" fill="#117865"/><path d="M2.6 6.2l2.4 2.4 4.6-4.8" fill="none" stroke="#fff" stroke-width="1.4"/></svg>
<svg class="a" style="left:1819.3px;top:881.4px;" width="11" height="16" viewBox="0 0 11 16"><g fill="none" stroke="#252423" stroke-width="1.1"><rect x="0.8" y="0.8" width="2.8" height="2.8"/><rect x="6.6" y="6.4" width="2.8" height="2.8"/><rect x="6.6" y="11.8" width="2.8" height="2.8"/><path d="M2.2 3.6v9.6h4.4M2.2 7.8h4.4"/></g></svg>
<span class="t" style="left:1836.04px;top:885px;font-size:12px;line-height:12px;color:#252423;letter-spacing:-0.02px;">Date Hierar...</span>
<svg class="a" style="left:1825px;top:890px;" width="12" height="12" viewBox="0 0 12 12"><circle cx="6" cy="6" r="6" fill="#117865"/><path d="M3.4 6.2l1.9 1.9 3.4-3.6" fill="none" stroke="#fff" stroke-width="1.2"/></svg>
<svg class="a" style="left:1814px;top:908px;" width="12" height="12" viewBox="0 0 12 12"><rect x="0" y="0" width="12" height="12" rx="1.5" fill="#117865"/><path d="M2.6 6.2l2.4 2.4 4.6-4.8" fill="none" stroke="#fff" stroke-width="1.4"/></svg>
<span class="t" style="left:1851.76px;top:909px;font-size:12px;line-height:12px;color:#252423;letter-spacing:-0.53px;">Year</span>
<svg class="a" style="left:1814px;top:932px;" width="12" height="12" viewBox="0 0 12 12"><rect x="0" y="0" width="12" height="12" rx="1.5" fill="#117865"/><path d="M2.6 6.2l2.4 2.4 4.6-4.8" fill="none" stroke="#fff" stroke-width="1.4"/></svg>
<span class="t" style="left:1851.46px;top:933px;font-size:12px;line-height:12px;color:#252423;letter-spacing:0.09px;">Quarter</span>
<svg class="a" style="left:1814px;top:956px;" width="12" height="12" viewBox="0 0 12 12"><rect x="0" y="0" width="12" height="12" rx="1.5" fill="#117865"/><path d="M2.6 6.2l2.4 2.4 4.6-4.8" fill="none" stroke="#fff" stroke-width="1.4"/></svg>
<span class="t" style="left:1851.04px;top:957px;font-size:12px;line-height:12px;color:#252423;letter-spacing:0.83px;">Month</span>
<svg class="a" style="left:1814px;top:980px;" width="12" height="12" viewBox="0 0 12 12"><rect x="0" y="0" width="12" height="12" rx="1.5" fill="#117865"/><path d="M2.6 6.2l2.4 2.4 4.6-4.8" fill="none" stroke="#fff" stroke-width="1.4"/></svg>
<span class="t" style="left:1851.04px;top:981px;font-size:12px;line-height:12px;color:#252423;letter-spacing:-0.45px;">Day</span>
</div></div>
<div class="a" style="left:1745px;top:205.5px;width:170.5px;height:22.5px;background:#fff;border:1px solid #d2d0ce;border-bottom:1px solid #8a8886;box-sizing:border-box;border-radius:4px;"></div>
<svg class="a" style="left:1756.5px;top:210px;" width="15" height="15" viewBox="0 0 15 15"><circle cx="5.8" cy="5.8" r="4.8" fill="none" stroke="#605e5c" stroke-width="1.1"/><path d="M9.4 9.4l4.6 4.6" stroke="#605e5c" stroke-width="1.1"/></svg>
<span class="t" style="left:1777.67px;top:210px;font-size:14px;line-height:14px;color:#605e5c;letter-spacing:-0.43px;">Search</span>
<div class="a" style="left:1908px;top:347px;width:8px;height:652px;background:#8a8886;"></div>
<!-- s7_bottom -->
<div class="a" style="left:168.5px;top:972px;width:384.5px;height:35px;background:#ffffff;"></div>
<div class="a" style="left:168px;top:972px;width:1px;height:35px;background:#c8c6c4;"></div>
<div class="a" style="left:245px;top:972px;width:1px;height:35px;background:#c8c6c4;"></div>
<div class="a" style="left:321px;top:972px;width:1px;height:35px;background:#c8c6c4;"></div>
<div class="a" style="left:398px;top:972px;width:1px;height:35px;background:#c8c6c4;"></div>
<div class="a" style="left:474px;top:972px;width:1px;height:35px;background:#c8c6c4;"></div>
<div class="a" style="left:475px;top:1003px;width:78px;height:4px;background:#117865;"></div>
<div class="a" style="left:553px;top:972px;width:39px;height:35px;background:#117865;"></div>
<svg class="a" style="left:566.8px;top:983px;" width="11.3" height="11.3" viewBox="0 0 11.3 11.3"><path d="M5.65 0v11.3M0 5.65h11.3" stroke="#fff" stroke-width="3"/></svg>
<span class="t" style="left:188.04px;top:985px;font-size:12px;line-height:12px;color:#252423;letter-spacing:-0.31px;">Page 1</span>
<span class="t" style="left:264.54px;top:985px;font-size:12px;line-height:12px;color:#252423;letter-spacing:-0.31px;">Page 2</span>
<span class="t" style="left:340.84px;top:985px;font-size:12px;line-height:12px;color:#252423;letter-spacing:-0.32px;">Page 3</span>
<span class="t" style="left:417.54px;top:985px;font-size:12px;line-height:12px;color:#252423;letter-spacing:-0.36px;">Page 4</span>
<span class="t" style="left:494.54px;top:985px;font-size:12px;line-height:12px;color:#252423;letter-spacing:-0.18px;-webkit-text-stroke:0.2px #252423;">Page 5</span>
<svg class="a" style="left:52.5px;top:979px;" width="20" height="15" viewBox="0 0 20 15"><g fill="none" stroke="#484644"><rect x="1.2" y="1.4" width="17.6" height="9.4" stroke-width="1.6"/><path d="M10 10.8v2.4M7 13.5h6" stroke-width="1.1"/></g></svg>
<div class="a" style="left:51px;top:1000.4px;width:24px;height:2.6px;background:#117865;border-radius:1.3px;"></div>
<svg class="a" style="left:100px;top:976.5px;" width="14" height="21" viewBox="0 0 14 21"><rect x="1.2" y="1.2" width="11.6" height="18.6" rx="1.6" fill="none" stroke="#484644" stroke-width="1.3"/><rect x="5.6" y="16" width="2.8" height="1.4" fill="#484644"/></svg>
<svg class="a" style="left:135px;top:986px;" width="5" height="8" viewBox="0 0 5 8"><path d="M4.6 0.4v7.2L0.6 4z" fill="#c8c6c4"/></svg>
<svg class="a" style="left:157px;top:986px;" width="5" height="8" viewBox="0 0 5 8"><path d="M0.4 0.4v7.2L4.4 4z" fill="#c8c6c4"/></svg>
<span class="t" style="left:3.54px;top:1015px;font-size:12px;line-height:12px;color:#252423;letter-spacing:-0.14px;">Page 5 of 5</span>
<div class="a" style="left:1708px;top:1018.8px;width:4.4px;height:2px;background:#484644;"></div>
<div class="a" style="left:1717px;top:1019.2px;width:100px;height:1px;background:#55534f;"></div>
<div class="a" style="left:1767.1px;top:1014.4px;width:4px;height:10.2px;background:#55534f;"></div>
<svg class="a" style="left:1823px;top:1015.6px;" width="8" height="8" viewBox="0 0 8 8"><path d="M4 0.2v7.6M0.2 4h7.6" stroke="#3b3a39" stroke-width="1.2"/></svg>
<span class="t" style="left:1844.1px;top:1014px;font-size:12px;line-height:12px;color:#605e5c;letter-spacing:-0.1px;">112%</span>
<svg class="a" style="left:1886px;top:1014px;" width="16" height="12" viewBox="0 0 16 12"><g fill="none" stroke="#3b3a39"><rect x="0.5" y="0.5" width="15" height="11" stroke-width="1"/><path d="M2.8 5V2.8h2.600M10.600 2.800h2.600V5M13.200 7v2.200h-2.600M5.400 9.200h-2.600V7" stroke-width="1.100"/></g></svg>
<!-- s8_leftnav -->
<svg class="a" style="left:0;top:0;" width="41" height="320" viewBox="0 0 41 320"><g fill="none" stroke="#201f1e" stroke-width="1.1" shape-rendering="auto"><path d="M14.5 173.200V186.400H28"/><rect x="16.500" y="176.500" width="2" height="8"/><rect x="20.500" y="178.500" width="2" height="6"/><rect x="24.500" y="174.500" width="2" height="10"/></g><g fill="none" stroke="#605e5c" stroke-width="1.100"><rect x="13.500" y="212.500" width="15.400" height="14.200"/><path d="M13.500 214.600h15.400M13.500 218.400h15.400M13.500 222.500h15.400M18.500 214.600v12M23.800 214.600v12"/></g><g fill="none" stroke="#605e5c" stroke-width="1.100"><rect x="12.400" y="256.400" width="7.400" height="7.400"/><path d="M12.400 260h7.400"/><rect x="22.400" y="251.500" width="7.400" height="6.800"/><path d="M22.400 254.800h7.400"/><rect x="22.400" y="261.700" width="7.400" height="6.800"/><path d="M22.400 265.200h7.400"/><path d="M16.200 256.400v-2.800h6.200M16.200 263.800v2.600h6.200"/></g><g fill="none" stroke="#605e5c" stroke-width="1.100"><path d="M15.500 301V294.400c0-1.200 0.800-2 2-2h5.400l4.400 4.400v7.400c0 1.800-0.800 3.200-2.400 4"/><path d="M22.900 292.600v2.600c0 1 0.600 1.600 1.600 1.600h2.600"/></g></svg>
<span class="t" style="left:10.27px;top:303px;font-size:6.6px;line-height:6.6px;color:#605e5c;letter-spacing:1.03px;">DAX</span>
</body></html>
